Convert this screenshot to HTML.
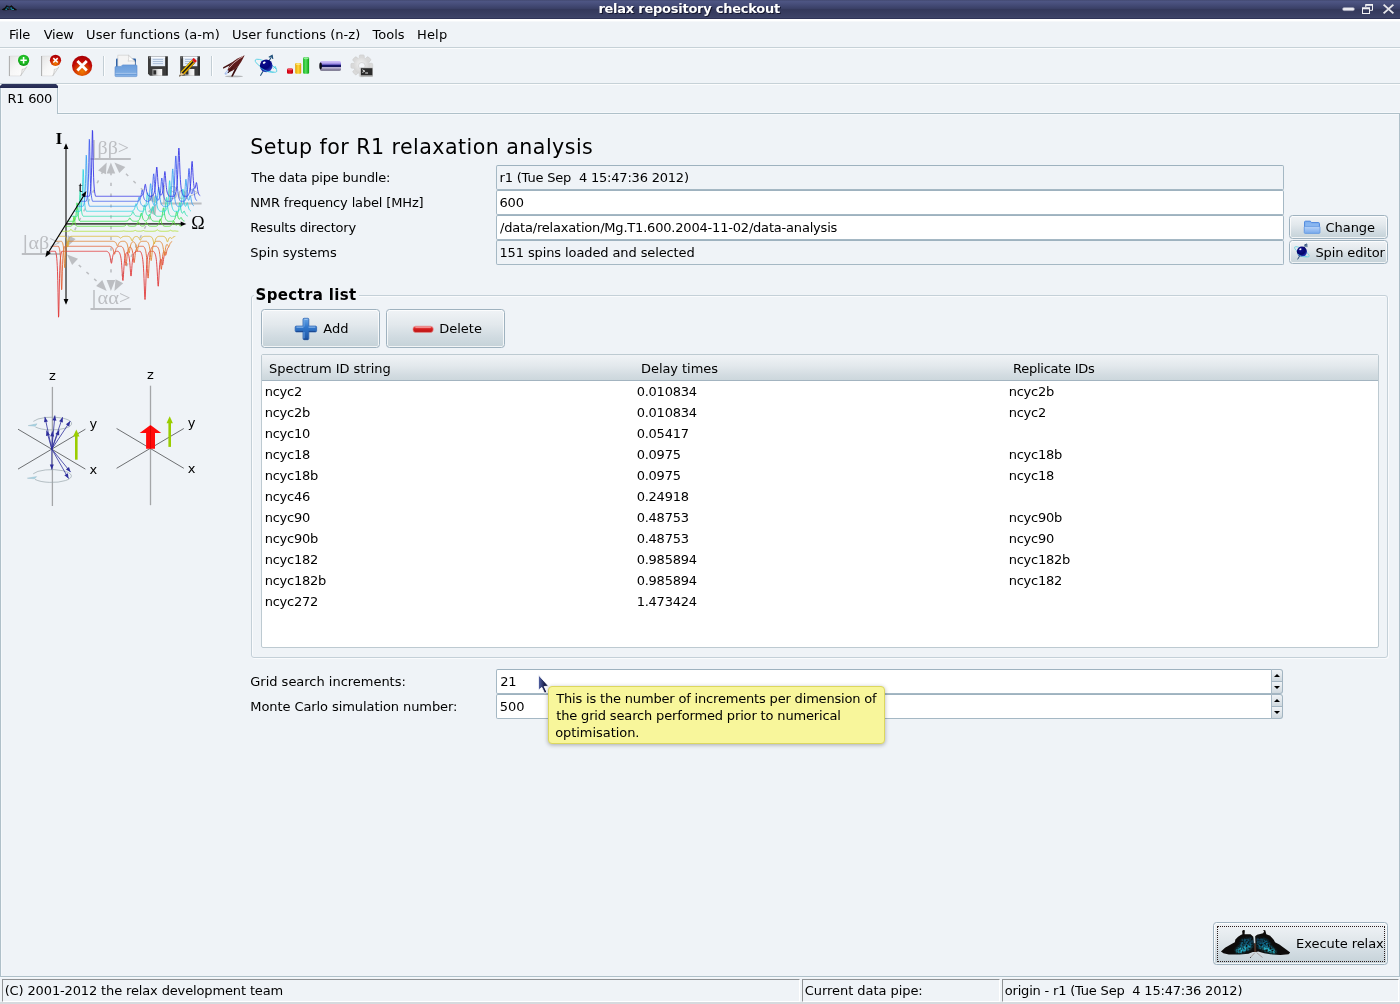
<!DOCTYPE html>
<html>
<head>
<meta charset="utf-8">
<title>relax repository checkout</title>
<style>
html,body{margin:0;padding:0;}
body{width:1400px;height:1004px;overflow:hidden;background:#eff3f7;font-family:"DejaVu Sans","Liberation Sans",sans-serif;font-size:13px;color:#000;position:relative;}
#root{position:absolute;left:0;top:0;width:1400px;height:1004px;will-change:transform;}
.abs{position:absolute;}
.t{position:absolute;white-space:pre;line-height:16px;height:16px;letter-spacing:-0.2px;}
#titlebar{left:0;top:0;width:1400px;height:19px;background:linear-gradient(#3f4569 0px,#4e5685 1px,#4a517e 3px,#414872 6px,#3a4066 8.5px,#33385a 9px,#353a5d 11px,#3c4266 17px,#3f4569 18px,#2f3458 18.4px,#2f3458 19px);}
#titletext{top:0;color:#fff;font-weight:bold;font-size:13px;line-height:17px;text-shadow:1px 1px 0 #15172e;}
.hl{position:absolute;left:0;width:1400px;height:1px;}
.field{position:absolute;box-sizing:border-box;border:1px solid #a5b8c4;border-top-color:#9eb2bf;border-radius:2px;height:25px;background:#fff;}
.field.ro{background:#eff3f7;box-shadow:none;}
.btn{position:absolute;box-sizing:border-box;border:1px solid #9fb2bf;border-radius:3.5px;background:linear-gradient(#f0f3f6 0%,#e2e8ec 40%,#d2dce2 70%,#c5d2d8 100%);box-shadow:inset 0 0 0 1px rgba(255,255,255,.75);}
.sbtn{position:absolute;box-sizing:border-box;left:1271px;width:12px;height:13px;border:1px solid #a3b5c2;border-left-color:#a9bac6;background:linear-gradient(#f0f3f6,#d0d9df);}
.sbtn i{position:absolute;left:2.1px;width:0;height:0;border-left:3.1px solid transparent;border-right:3.1px solid transparent;}
.sbtn i.u{top:3.8px;border-bottom:3.5px solid #000;}
.sbtn i.d{top:3.6px;border-top:3.5px solid #000;}
.sb{position:absolute;top:979px;height:23px;box-sizing:border-box;border-top:1px solid #8f9294;border-left:1px solid #8f9294;border-right:1px solid #fff;border-bottom:1px solid #fff;}
</style>
</head>
<body>
<div id="root">
<div id="titlebar" class="abs"></div>
<div id="titletext" class="t" style="left:598.4px;letter-spacing:-0.25px;">relax repository checkout</div>
<div class="hl" style="top:19px;height:2px;background:#fff;"></div>
<div class="hl" style="top:21px;background:#f6f8fa;"></div>
<div class="hl" style="top:47px;background:#c6d1d7;"></div>
<div class="hl" style="top:48px;background:#fbfcfd;"></div>
<div id="toolbar" class="abs" style="left:0;top:49px;width:1400px;height:34px;"><svg width="400" height="34" viewBox="0 49 400 34" style="position:absolute;left:0;top:0;">
<defs>
<linearGradient id="gPaper" x1="0" y1="0" x2="1" y2="1"><stop offset="0" stop-color="#e4e4e4"/><stop offset=".45" stop-color="#f6f6f6"/><stop offset="1" stop-color="#ffffff"/></linearGradient>
<radialGradient id="gGreen" cx=".5" cy=".4" r=".6"><stop offset="0" stop-color="#35d23a"/><stop offset=".7" stop-color="#18b41f"/><stop offset="1" stop-color="#0c9414"/></radialGradient>
<radialGradient id="gRed" cx=".5" cy=".78" r=".75"><stop offset="0" stop-color="#f07c00"/><stop offset=".35" stop-color="#dc4a00"/><stop offset=".7" stop-color="#c00a06"/><stop offset="1" stop-color="#a80004"/></radialGradient>
<linearGradient id="gFold" x1="0" y1="0" x2="0" y2="1"><stop offset="0" stop-color="#6a9ddb"/><stop offset="1" stop-color="#86b2e6"/></linearGradient>
<linearGradient id="gMetal" x1="0" y1="0" x2="1" y2="0"><stop offset="0" stop-color="#9a9a9a"/><stop offset=".6" stop-color="#e8e8e8"/><stop offset="1" stop-color="#fafafa"/></linearGradient>
<linearGradient id="gCyl" x1="0" y1="0" x2="0" y2="1"><stop offset="0" stop-color="#d2c2fa"/><stop offset=".22" stop-color="#b6a6f0"/><stop offset=".36" stop-color="#6a5cc0"/><stop offset=".44" stop-color="#15156a"/><stop offset=".58" stop-color="#15155e"/><stop offset=".66" stop-color="#b8b0d4"/><stop offset=".8" stop-color="#a69ebc"/><stop offset="1" stop-color="#57526e"/></linearGradient>
<radialGradient id="gSph" cx=".4" cy=".3" r=".8"><stop offset="0" stop-color="#0c0c92"/><stop offset=".5" stop-color="#04047a"/><stop offset=".82" stop-color="#2636b8"/><stop offset="1" stop-color="#86a6ea"/></radialGradient>
<linearGradient id="gBarR" x1="0" y1="0" x2="1" y2="0"><stop offset="0" stop-color="#c80010"/><stop offset=".5" stop-color="#e81020"/><stop offset="1" stop-color="#b00010"/></linearGradient>
<linearGradient id="gBarY" x1="0" y1="0" x2="1" y2="0"><stop offset="0" stop-color="#e0a000"/><stop offset=".5" stop-color="#ffd83a"/><stop offset="1" stop-color="#e09800"/></linearGradient>
<linearGradient id="gBarG" x1="0" y1="0" x2="1" y2="0"><stop offset="0" stop-color="#10b018"/><stop offset=".45" stop-color="#58e060"/><stop offset="1" stop-color="#08a010"/></linearGradient>
<radialGradient id="gGear" cx=".45" cy=".4" r=".6"><stop offset="0" stop-color="#f2f2f2"/><stop offset="1" stop-color="#cfcfcf"/></radialGradient>
<g id="paper">
 <path d="M9.4 56.1 H26.7 V66.9 L20.6 75.9 H9.4 Z" fill="url(#gPaper)"/>
 <path d="M9.4 56.1 H26.7 M9.4 75.9 H20.6" stroke="#d9d9d9" stroke-width=".6"/>
 <path d="M26.7 56.1 V66.9" stroke="#e3e3e3" stroke-width=".6"/>
 <path d="M9.4 56 V76" stroke="#a9a9a9" stroke-width="1"/>
 <path d="M20.6 75.9 C21.6 73.4 22.2 71.4 22 69.4 C23.8 69.2 25.4 68.4 26.7 66.9 Z" fill="#f2f2f2" stroke="#b8b8b8" stroke-width=".6"/>
</g>
<g id="floppy">
 <path d="M148 56.2 H167.8 V75.8 H150 L148 73.8 Z" fill="#3c3c3c"/>
 <path d="M148.4 56.6 H167.4" stroke="#6a6a6a" stroke-width=".8"/>
 <rect x="166.2" y="57" width="1.2" height="18" fill="#2a2a2a"/>
 <rect x="150.9" y="56.6" width="14.2" height="9.6" fill="#e6eef8"/>
 <rect x="150.9" y="56.6" width="14.2" height="1.4" fill="#f8fbff"/>
 <path d="M152.8 59.4 H163 M152.8 61.5 H163 M152.8 63.6 H163" stroke="#9db4d2" stroke-width=".8"/>
 <rect x="152.4" y="69" width="9.8" height="6.8" fill="url(#gMetal)"/>
 <rect x="153.4" y="70.3" width="2.8" height="4.2" fill="#2c2c2c"/>
 <rect x="149" y="57.2" width="1" height="1.2" fill="#888"/>
</g>
</defs>
<!-- new -->
<use href="#paper"/>
<circle cx="23.6" cy="60.3" r="5.6" fill="url(#gGreen)"/>
<path d="M20.4 60.3 H26.8 M23.6 57.1 V63.5" stroke="#fff" stroke-width="1.5"/>
<!-- close -->
<use href="#paper" x="32.2"/>
<circle cx="55.5" cy="60.3" r="5.6" fill="url(#gRed)"/>
<path d="M53.3 58.1 L57.7 62.5 M57.7 58.1 L53.3 62.5" stroke="#fff" stroke-width="1.5"/>
<!-- close all -->
<circle cx="82.1" cy="65.8" r="10.1" fill="url(#gRed)"/>
<path d="M77.4 61.1 L86.8 70.5 M86.8 61.1 L77.4 70.5" stroke="#fff" stroke-width="2.8"/>
<!-- sep -->
<rect x="103" y="56" width="1" height="20" fill="#c3ced5"/><rect x="104" y="56" width="1" height="20" fill="#fcfdfe"/>
<!-- open -->
<path d="M116 59.2 Q116 58.4 117 58.4 H135 Q136 58.4 136 59.4 V70 H116 Z" fill="#2f62a6"/>
<path d="M117.8 55.2 H128.5 L135 61.6 V68 H117.8 Z" fill="#f4f4f4" stroke="#c9c9c9" stroke-width=".6"/>
<path d="M128.5 55.2 C129 57.5 128.8 59.8 128 61.2 C130.5 60.6 133 60.8 135 61.6 Z" fill="#fff" stroke="#c0c0c0" stroke-width=".6"/>
<path d="M115 67.4 Q115 66.4 116 66.4 H121 L122.5 64.9 H136 Q137 64.9 137 65.9 V75.6 Q137 76.6 136 76.6 H116 Q115 76.6 115 75.6 Z" fill="url(#gFold)" stroke="#5a8ccc" stroke-width=".6"/>
<path d="M115.6 73.4 H136.4" stroke="#b5d0f0" stroke-width=".9"/>
<path d="M115.6 74.3 H136.4" stroke="#5f92d0" stroke-width=".7"/>
<!-- save -->
<use href="#floppy"/>
<!-- save as -->
<use href="#floppy" x="32.2"/>
<g transform="translate(179.3 76.5) rotate(-46.9)">
 <path d="M0 0 L4.6 -2.2 H20.6 V2.2 H4.6 Z" fill="#1a1a1a"/>
 <path d="M4.6 -2.2 H20.6 V-0.8 H4.6 Z" fill="#f4c400"/>
 <path d="M4.6 0.7 H20.6 V2.2 H4.6 Z" fill="#dca400"/>
 <path d="M0 0 L4.6 -2.2 V2.2 Z" fill="#e6c48c"/>
 <path d="M0 0 L1.6 -0.75 V0.75 Z" fill="#333"/>
 <rect x="20.6" y="-2.3" width="2.9" height="4.6" rx="1" fill="#e01414"/>
</g>
<!-- sep -->
<rect x="211" y="56" width="1" height="20" fill="#c3ced5"/><rect x="212" y="56" width="1" height="20" fill="#fcfdfe"/>
<!-- rocket -->
<ellipse cx="234" cy="76.4" rx="9" ry=".8" fill="#7a7a7a" opacity=".5"/>
<path d="M227.8 69.6 L224.5 73.2 224.9 74.4 226.1 74.8 229.8 71.6 Z" fill="#a4bcec"/>
<path d="M228.2 70.4 L225.7 73.0 226.3 73.6 229.0 71.2 Z" fill="#e8effc"/>
<path d="M234.4 61.0 L223.1 67.2 223.2 68.7 230.1 65.2 Z" fill="#451212"/>
<path d="M238.9 64.9 L232.8 76.5 231.1 76.6 234.6 69.2 Z" fill="#3a0d0d"/>
<path d="M227.6 69.7 L228.9 66.8 231.3 63.6 234.2 60.8 237.6 58.5 241.4 56.7 244.6 55.2 243.0 58.4 241.1 62.1 238.7 65.4 235.9 68.3 232.6 70.6 229.6 71.9 Z" fill="#5e1a1a"/>
<path d="M228.9 68.3 L233.6 63.1 239.2 58.8 243.1 56.3" stroke="#d8b8b8" stroke-width=".9" fill="none"/>
<path d="M234.6 65.5 L228.6 73.1 227.4 72.5 Z" fill="#2c0808"/>
<!-- spin -->
<path d="M260.4 75.8 L271.8 56.2" stroke="#1c4c78" stroke-width="1.05"/>
<path d="M268.8 57.2 L272.2 55.4 L272.8 59" stroke="#1c4c78" stroke-width="1.1" fill="none"/>
<ellipse cx="266.2" cy="65.8" rx="12.2" ry="3.6" transform="rotate(28 266.2 65.4)" fill="none" stroke="#3ccbe2" stroke-width=".7"/>
<circle cx="266.2" cy="65.8" r="6.4" fill="url(#gSph)"/>
<path d="M260.2 67.4 C263 69.8 268.4 72.8 273.6 72.2" stroke="#3ccbe2" stroke-width=".8" fill="none"/>
<ellipse cx="264.2" cy="62.6" rx="1.5" ry="1" fill="#fff" transform="rotate(-25 264.2 62.6)"/>
<path d="M273.4 68.6 L275.2 66.4 L276.4 69" stroke="#35c8e0" stroke-width=".8" fill="none"/>
<!-- bars -->
<rect x="287" y="68.4" width="6" height="5.4" rx="1.2" fill="url(#gBarR)"/>
<ellipse cx="290" cy="69.4" rx="2.6" ry=".9" fill="#f05060"/>
<rect x="295.2" y="63" width="6" height="10.8" rx="1.2" fill="url(#gBarY)"/>
<ellipse cx="298.2" cy="64.1" rx="2.6" ry=".9" fill="#ffe880"/>
<rect x="303.1" y="57.2" width="6" height="16.6" rx="1.2" fill="url(#gBarG)"/>
<ellipse cx="306.1" cy="58.3" rx="2.6" ry=".9" fill="#90f098"/>
<!-- pipe -->
<rect x="320" y="61" width="21" height="9.8" rx="1.6" fill="url(#gCyl)"/>
<ellipse cx="320.6" cy="65.9" rx="1.3" ry="3.4" fill="#0a0a14"/>
<!-- gear -->
<g transform="translate(361.8 65.8)">
 <g fill="#d9d9d9" stroke="#c6c6c6" stroke-width=".5">
  <rect x="-2.5" y="-10.9" width="5" height="21.8" rx="1.1"/>
  <rect x="-2.5" y="-10.9" width="5" height="21.8" rx="1.1" transform="rotate(45)"/>
  <rect x="-2.5" y="-10.9" width="5" height="21.8" rx="1.1" transform="rotate(90)"/>
  <rect x="-2.5" y="-10.9" width="5" height="21.8" rx="1.1" transform="rotate(135)"/>
 </g>
 <circle r="8.4" fill="url(#gGear)"/>
 <circle r="3.3" fill="#f4f6f9" stroke="#c4c4c4" stroke-width=".6"/>
</g>
<rect x="360.3" y="67.2" width="12.7" height="9.6" rx=".6" fill="#c8c8c8"/>
<rect x="360.9" y="68.2" width="11.5" height="7.2" fill="#2b2b2b"/>
<rect x="360.9" y="75.4" width="11.5" height="1" fill="#9a9a9a"/>
<path d="M362.4 69.8 L364.8 71.1 L362.4 72.4" stroke="#fff" stroke-width=".9" fill="none"/>
<path d="M365.2 73 H368" stroke="#fff" stroke-width=".9"/>
</svg>
</div>
<div class="hl" style="top:83px;background:#c6d1d7;"></div>
<div class="hl" style="top:84px;background:#fbfcfd;"></div>
<div class="abs" style="left:0;top:113px;width:1400px;height:864px;box-sizing:border-box;border:1px solid #afc0c9;box-shadow:0 1px 0 #f5f8fb;"></div>
<div class="abs" style="left:58px;top:112px;width:1342px;height:1px;background:#f5f8fb;"></div>
<div class="abs" style="left:58px;top:114px;width:1341px;height:1px;background:#f5f8fb;"></div>
<div class="abs" style="left:1px;top:114px;width:1px;height:862px;background:#f5f8fb;"></div>
<div class="abs" style="left:0;top:86px;width:58px;height:28px;box-sizing:border-box;border-left:1px solid #afc0c9;border-right:1px solid #afc0c9;background:#eff3f7;box-shadow:inset 1px 0 0 #f5f8fb;"></div>
<div class="abs" style="left:58px;top:88px;width:1px;height:24px;background:#f5f8fb;"></div>
<div class="abs" style="left:0;top:84px;width:58px;height:4px;background:linear-gradient(#30375f,#222850);clip-path:polygon(2px 0,56px 0,58px 2px,58px 4px,0 4px,0 2px);"></div>
<div id="img1" class="abs" style="left:0;top:113px;width:240px;height:230px;"><svg width="240" height="230" viewBox="0 113 240 230" style="position:absolute;left:0;top:0;">
<g stroke="#bcbec2" fill="none" stroke-width="2">
<path d="M90.5 158.9 H130.8 M90.5 308.9 H130.8 M21.8 253.9 H60 M160.4 203.6 H201.6"/>
<path d="M94 140 V158.9 M94 290 V308.9 M25.3 235 V253.9 M164 185 V203.6" stroke-width="1.5"/>
<path d="M111 172 V282" stroke-dasharray="3.2 7.6" stroke-width="1.6"/>
<path d="M103 171 L71 238 M118.5 166.5 L152 199 M71 258 L102 286 M117.5 285 L152 213" stroke-dasharray="3.2 7.2" stroke-width="1.5"/>
</g>
<g fill="#bcbec2">
<path d="M110.9 162.4 L115.2 173.4 L106.6 173.4 Z"/>
<path d="M106.7 162.4 L105.9 174.2 L98.1 170.5 Z"/>
<path d="M114.4 162.4 L125.3 166.9 L119.3 173.1 Z"/>
<path d="M110.9 291.0 L106.6 280.0 L115.2 280.0 Z"/>
<path d="M106.7 291.0 L96.1 285.9 L102.3 280.0 Z"/>
<path d="M114.4 291.0 L115.6 279.2 L123.2 283.2 Z"/>
<path d="M67.0 247.0 L67.8 235.2 L75.6 238.9 Z"/>
<path d="M67.0 254.4 L78.0 258.8 L72.1 265.0 Z"/>
<path d="M158.0 204.0 L147.1 199.5 L153.1 193.3 Z"/>
<path d="M156.7 203.7 L155.5 215.5 L147.9 211.5 Z"/>
</g>
<g fill="#bcbec2" font-family="Liberation Serif, DejaVu Serif, serif" font-size="18">
<text x="97.6" y="154" textLength="31.5" lengthAdjust="spacingAndGlyphs">ββ&gt;</text>
<text x="97.6" y="304" textLength="33" lengthAdjust="spacingAndGlyphs">αα&gt;</text>
<text x="28.6" y="249" textLength="32" lengthAdjust="spacingAndGlyphs">αβ&gt;</text>
<text x="167.4" y="198.6" textLength="32" lengthAdjust="spacingAndGlyphs">βα&gt;</text>
</g>
<path d="M66 148 V300" stroke="#4a4a4a" stroke-width="1.5"/>
<g fill="#000"><path d="M66.0 143.2 L68.4 149.0 L63.6 149.0 Z"/><path d="M66.0 304.8 L63.6 299.0 L68.4 299.0 Z"/></g>
<path d="M66 223.9 H182" stroke="#4a4a4a" stroke-width="1.7"/>
<g fill="#000"><path d="M186.3 223.9 L180.7 226.2 L180.7 221.6 Z"/></g>
<polyline points="49.00,251.30 49.25,251.30 49.50,251.30 49.75,251.30 50.00,251.30 50.25,251.30 50.50,251.30 50.75,251.30 51.00,251.30 51.25,251.30 51.50,251.30 51.75,251.30 52.00,251.30 52.25,251.30 52.50,251.30 52.75,251.30 53.00,251.30 53.25,251.30 53.50,251.30 53.75,251.30 54.00,251.30 54.25,251.30 54.50,251.30 54.75,251.30 55.00,251.30 55.25,251.30 55.50,251.47 55.75,252.23 56.00,253.19 56.25,254.43 56.50,256.06 56.75,258.25 57.00,261.28 57.25,265.55 57.50,271.68 57.75,280.50 58.00,292.64 58.25,306.85 58.50,317.20 58.75,315.88 59.00,304.04 59.25,289.96 59.50,278.48 59.75,270.27 60.00,264.57 60.25,260.59 60.50,257.76 60.75,255.69 61.00,254.15 61.25,252.98 61.50,252.06 61.75,251.34 62.00,251.30 62.25,251.30 62.50,251.30 62.75,251.30 63.00,251.30 63.25,251.30 63.50,251.30 63.75,251.30 64.00,251.30 64.25,251.30 64.50,251.30 64.75,251.30 65.00,251.30 65.25,251.30 65.50,251.30 65.75,251.30 66.00,251.30 66.25,251.30 66.50,251.30 66.75,251.30 67.00,251.30 67.25,251.30 67.50,251.30 67.75,251.30 68.00,251.30 68.25,251.30 68.50,251.30 68.75,251.30 69.00,251.30 69.25,251.30 69.50,251.30 69.75,251.30 70.00,251.30 70.25,251.30 70.50,251.30 70.75,251.30 71.00,251.30 71.25,251.30 71.50,251.30 71.75,251.30 72.00,251.30 72.25,251.30 72.50,251.30 72.75,251.30 73.00,251.30 73.25,251.30 73.50,251.30 73.75,251.30 74.00,251.30 74.25,251.30 74.50,251.30 74.75,251.30 75.00,251.30 75.25,251.30 75.50,251.30 75.75,251.30 76.00,251.30 76.25,251.30 76.50,251.30 76.75,251.30 77.00,251.30 77.25,251.30 77.50,251.30 77.75,251.30 78.00,251.30 78.25,251.30 78.50,251.30 78.75,251.30 79.00,251.30 79.25,251.30 79.50,251.30 79.75,251.30 80.00,251.30 80.25,251.30 80.50,251.30 80.75,251.30 81.00,251.30 81.25,251.30 81.50,251.30 81.75,251.30 82.00,251.30 82.25,251.30 82.50,251.30 82.75,251.30 83.00,251.30 83.25,251.30 83.50,251.30 83.75,251.30 84.00,251.30 84.25,251.30 84.50,251.30 84.75,251.30 85.00,251.30 85.25,251.30 85.50,251.30 85.75,251.30 86.00,251.30 86.25,251.30 86.50,251.30 86.75,251.30 87.00,251.30 87.25,251.30 87.50,251.30 87.75,251.30 88.00,251.30 88.25,251.30 88.50,251.30 88.75,251.30 89.00,251.30 89.25,251.30 89.50,251.30 89.75,251.30 90.00,251.30 90.25,251.30 90.50,251.30 90.75,251.30 91.00,251.30 91.25,251.30 91.50,251.30 91.75,251.30 92.00,251.30 92.25,251.30 92.50,251.30 92.75,251.30 93.00,251.30 93.25,251.30 93.50,251.30 93.75,251.30 94.00,251.30 94.25,251.30 94.50,251.30 94.75,251.30 95.00,251.30 95.25,251.30 95.50,251.30 95.75,251.30 96.00,251.30 96.25,251.30 96.50,251.30 96.75,251.30 97.00,251.30 97.25,251.30 97.50,251.30 97.75,251.30 98.00,251.30 98.25,251.30 98.50,251.30 98.75,251.30 99.00,251.30 99.25,251.30 99.50,251.30 99.75,251.30 100.00,251.30 100.25,251.30 100.50,251.30 100.75,251.30 101.00,251.30 101.25,251.30 101.50,251.30 101.75,251.30 102.00,251.30 102.25,251.30 102.50,251.30 102.75,251.30 103.00,251.30 103.25,251.30 103.50,251.30 103.75,251.30 104.00,251.30 104.25,251.30 104.50,251.30 104.75,251.30 105.00,251.30 105.25,251.30 105.50,251.30 105.75,251.30 106.00,251.30 106.25,251.30 106.50,251.30 106.75,251.33 107.00,251.42 107.25,251.52 107.50,251.64 107.75,251.78 108.00,251.95 108.25,252.16 108.50,252.41 108.75,252.71 109.00,253.10 109.25,253.58 109.50,254.19 109.75,254.97 110.00,255.96 110.25,257.22 110.50,258.74 110.75,260.45 111.00,262.08 111.25,263.16 111.50,263.27 111.75,262.35 112.00,260.79 112.25,259.07 112.50,257.50 112.75,256.19 113.00,255.15 113.25,254.33 113.50,253.69 113.75,253.18 114.00,252.78 114.25,252.46 114.50,252.20 114.75,251.99 115.00,251.81 115.25,251.67 115.50,251.54 115.75,251.44 116.00,251.35 116.25,251.30 116.50,251.30 116.75,251.30 117.00,251.30 117.25,251.30 117.50,251.30 117.75,251.30 118.00,251.30 118.25,251.38 118.50,251.59 118.75,251.84 119.00,252.13 119.25,252.48 119.50,252.89 119.75,253.39 120.00,254.00 120.25,254.75 120.50,255.69 120.75,256.87 121.00,258.36 121.25,260.27 121.50,262.70 121.75,265.77 122.00,269.49 122.25,273.67 122.50,277.64 122.75,280.30 123.00,280.56 123.25,278.32 123.50,274.51 123.75,270.30 124.00,266.46 124.25,263.26 124.50,260.71 124.75,258.71 125.00,257.14 125.25,255.90 125.50,254.93 125.75,254.14 126.00,253.51 126.25,252.98 126.50,252.72 126.75,252.56 127.00,252.49 127.25,252.50 127.50,252.61 127.75,252.88 128.00,253.36 128.25,253.94 128.50,254.66 128.75,255.56 129.00,256.70 129.25,258.15 129.50,260.01 129.75,262.37 130.00,265.28 130.25,268.68 130.50,272.19 130.75,274.99 131.00,276.09 131.25,274.99 131.50,272.19 131.75,268.68 132.00,265.28 132.25,262.37 132.50,260.01 132.75,258.15 133.00,256.70 133.25,255.56 133.50,254.66 133.75,253.94 134.00,253.36 134.25,252.88 134.50,252.49 134.75,252.17 135.00,251.90 135.25,251.66 135.50,251.47 135.75,251.30 136.00,251.30 136.25,251.30 136.50,251.30 136.75,251.30 137.00,251.30 137.25,251.30 137.50,251.30 137.75,251.30 138.00,251.30 138.25,251.30 138.50,251.30 138.75,251.30 139.00,251.30 139.25,251.30 139.50,251.30 139.75,251.30 140.00,251.30 140.25,251.30 140.50,251.63 140.75,252.01 141.00,252.46 141.25,252.99 141.50,253.62 141.75,254.38 142.00,255.30 142.25,256.43 142.50,257.83 142.75,259.59 143.00,261.81 143.25,264.63 143.50,268.25 143.75,272.83 144.00,278.51 144.25,285.12 144.50,291.95 144.75,297.41 145.00,299.54 145.25,297.41 145.50,291.95 145.75,285.12 146.00,278.51 146.25,272.83 146.50,268.25 146.75,264.63 147.00,261.81 147.25,259.59 147.50,257.83 147.75,256.43 148.00,255.30 148.25,254.38 148.50,253.62 148.75,252.99 149.00,252.46 149.25,252.01 149.50,251.63 149.75,251.30 150.00,251.30 150.25,251.30 150.50,251.30 150.75,251.30 151.00,251.30 151.25,251.30 151.50,251.30 151.75,251.30 152.00,251.30 152.25,251.30 152.50,251.30 152.75,251.30 153.00,251.30 153.25,251.30 153.50,251.34 153.75,251.59 154.00,251.87 154.25,252.21 154.50,252.60 154.75,253.08 155.00,253.65 155.25,254.34 155.50,255.19 155.75,256.25 156.00,257.57 156.25,259.26 156.50,261.40 156.75,264.14 157.00,267.61 157.25,271.86 157.50,276.73 157.75,281.57 158.00,285.19 158.25,286.23 158.50,284.23 158.75,280.11 159.00,275.31 159.25,270.83 159.50,267.13 159.75,264.26 160.00,262.13 160.25,260.63 160.50,259.66 160.75,259.16 161.00,259.10 161.25,259.48 161.50,260.30 161.75,261.51 162.00,262.99 162.25,264.35 162.50,265.06 162.75,264.67 163.00,263.27 163.25,261.47 163.50,259.57 163.75,257.88 164.00,256.48 164.25,255.38 164.50,254.51 164.75,253.83 165.00,253.30 165.25,252.87 165.50,252.53 165.75,252.25 166.00,252.02" fill="none" stroke="#e03434" stroke-width="0.88" stroke-linejoin="round"/>
<polyline points="52.08,246.30 52.33,246.30 52.58,246.30 52.83,246.30 53.08,246.30 53.33,246.30 53.58,246.30 53.83,246.30 54.08,246.30 54.33,246.30 54.58,246.30 54.83,246.30 55.08,246.30 55.33,246.30 55.58,246.30 55.83,246.30 56.08,246.30 56.33,246.30 56.58,246.30 56.83,246.30 57.08,246.30 57.33,246.30 57.58,246.30 57.83,246.30 58.08,246.30 58.33,246.30 58.58,246.41 58.83,246.91 59.08,247.55 59.33,248.36 59.58,249.44 59.83,250.89 60.08,252.89 60.33,255.70 60.58,259.75 60.83,265.57 61.08,273.58 61.33,282.96 61.58,289.80 61.83,288.92 62.08,281.11 62.33,271.81 62.58,264.24 62.83,258.82 63.08,255.06 63.33,252.43 63.58,250.56 63.83,249.20 64.08,248.18 64.33,247.41 64.58,246.80 64.83,246.33 65.08,246.30 65.33,246.30 65.58,246.30 65.83,246.30 66.08,246.30 66.33,246.30 66.58,246.30 66.83,246.30 67.08,246.30 67.33,246.30 67.58,246.30 67.83,246.30 68.08,246.30 68.33,246.30 68.58,246.30 68.83,246.30 69.08,246.30 69.33,246.30 69.58,246.30 69.83,246.30 70.08,246.30 70.33,246.30 70.58,246.30 70.83,246.30 71.08,246.30 71.33,246.30 71.58,246.30 71.83,246.30 72.08,246.30 72.33,246.30 72.58,246.30 72.83,246.30 73.08,246.30 73.33,246.30 73.58,246.30 73.83,246.30 74.08,246.30 74.33,246.30 74.58,246.30 74.83,246.30 75.08,246.30 75.33,246.30 75.58,246.30 75.83,246.30 76.08,246.30 76.33,246.30 76.58,246.30 76.83,246.30 77.08,246.30 77.33,246.30 77.58,246.30 77.83,246.30 78.08,246.30 78.33,246.30 78.58,246.30 78.83,246.30 79.08,246.30 79.33,246.30 79.58,246.30 79.83,246.30 80.08,246.30 80.33,246.30 80.58,246.30 80.83,246.30 81.08,246.30 81.33,246.30 81.58,246.30 81.83,246.30 82.08,246.30 82.33,246.30 82.58,246.30 82.83,246.30 83.08,246.30 83.33,246.30 83.58,246.30 83.83,246.30 84.08,246.30 84.33,246.30 84.58,246.30 84.83,246.30 85.08,246.30 85.33,246.30 85.58,246.30 85.83,246.30 86.08,246.30 86.33,246.30 86.58,246.30 86.83,246.30 87.08,246.30 87.33,246.30 87.58,246.30 87.83,246.30 88.08,246.30 88.33,246.30 88.58,246.30 88.83,246.30 89.08,246.30 89.33,246.30 89.58,246.30 89.83,246.30 90.08,246.30 90.33,246.30 90.58,246.30 90.83,246.30 91.08,246.30 91.33,246.30 91.58,246.30 91.83,246.30 92.08,246.30 92.33,246.30 92.58,246.30 92.83,246.30 93.08,246.30 93.33,246.30 93.58,246.30 93.83,246.30 94.08,246.30 94.33,246.30 94.58,246.30 94.83,246.30 95.08,246.30 95.33,246.30 95.58,246.30 95.83,246.30 96.08,246.30 96.33,246.30 96.58,246.30 96.83,246.30 97.08,246.30 97.33,246.30 97.58,246.30 97.83,246.30 98.08,246.30 98.33,246.30 98.58,246.30 98.83,246.30 99.08,246.30 99.33,246.30 99.58,246.30 99.83,246.30 100.08,246.30 100.33,246.30 100.58,246.30 100.83,246.30 101.08,246.30 101.33,246.30 101.58,246.30 101.83,246.30 102.08,246.30 102.33,246.30 102.58,246.30 102.83,246.30 103.08,246.30 103.33,246.30 103.58,246.30 103.83,246.30 104.08,246.30 104.33,246.30 104.58,246.30 104.83,246.30 105.08,246.30 105.33,246.30 105.58,246.30 105.83,246.30 106.08,246.30 106.33,246.30 106.58,246.30 106.83,246.30 107.08,246.30 107.33,246.30 107.58,246.30 107.83,246.30 108.08,246.30 108.33,246.30 108.58,246.30 108.83,246.30 109.08,246.30 109.33,246.30 109.58,246.30 109.83,246.32 110.08,246.38 110.33,246.45 110.58,246.52 110.83,246.62 111.08,246.73 111.33,246.87 111.58,247.03 111.83,247.23 112.08,247.49 112.33,247.80 112.58,248.21 112.83,248.72 113.08,249.38 113.33,250.21 113.58,251.21 113.83,252.34 114.08,253.41 114.33,254.13 114.58,254.20 114.83,253.60 115.08,252.57 115.33,251.43 115.58,250.39 115.83,249.53 116.08,248.84 116.33,248.30 116.58,247.88 116.83,247.54 117.08,247.28 117.33,247.07 117.58,246.90 117.83,246.75 118.08,246.64 118.33,246.54 118.58,246.46 118.83,246.39 119.08,246.33 119.33,246.30 119.58,246.30 119.83,246.30 120.08,246.30 120.33,246.30 120.58,246.30 120.83,246.30 121.08,246.30 121.33,246.35 121.58,246.49 121.83,246.66 122.08,246.85 122.33,247.08 122.58,247.35 122.83,247.68 123.08,248.08 123.33,248.58 123.58,249.20 123.83,249.97 124.08,250.96 124.33,252.22 124.58,253.82 124.83,255.85 125.08,258.31 125.33,261.06 125.58,263.69 125.83,265.44 126.08,265.61 126.33,264.13 126.58,261.62 126.83,258.84 127.08,256.31 127.33,254.19 127.58,252.51 127.83,251.19 128.08,250.15 128.33,249.34 128.58,248.69 128.83,248.18 129.08,247.76 129.33,247.41 129.58,247.24 129.83,247.13 130.08,247.08 130.33,247.09 130.58,247.16 130.83,247.34 131.08,247.66 131.33,248.04 131.58,248.51 131.83,249.11 132.08,249.86 132.33,250.82 132.58,252.05 132.83,253.60 133.08,255.53 133.33,257.77 133.58,260.09 133.83,261.94 134.08,262.66 134.33,261.94 134.58,260.09 134.83,257.77 135.08,255.53 135.33,253.60 135.58,252.05 135.83,250.82 136.08,249.86 136.33,249.11 136.58,248.51 136.83,248.04 137.08,247.66 137.33,247.34 137.58,247.09 137.83,246.87 138.08,246.69 138.33,246.54 138.58,246.41 138.83,246.30 139.08,246.30 139.33,246.30 139.58,246.30 139.83,246.30 140.08,246.30 140.33,246.30 140.58,246.30 140.83,246.30 141.08,246.30 141.33,246.30 141.58,246.30 141.83,246.30 142.08,246.30 142.33,246.30 142.58,246.30 142.83,246.30 143.08,246.30 143.33,246.30 143.58,246.52 143.83,246.77 144.08,247.06 144.33,247.41 144.58,247.83 144.83,248.33 145.08,248.94 145.33,249.69 145.58,250.61 145.83,251.77 146.08,253.23 146.33,255.10 146.58,257.49 146.83,260.51 147.08,264.26 147.33,268.62 147.58,273.13 147.83,276.73 148.08,278.14 148.33,276.73 148.58,273.13 148.83,268.62 149.08,264.26 149.33,260.51 149.58,257.49 149.83,255.10 150.08,253.23 150.33,251.77 150.58,250.61 150.83,249.69 151.08,248.94 151.33,248.33 151.58,247.83 151.83,247.41 152.08,247.06 152.33,246.77 152.58,246.52 152.83,246.30 153.08,246.30 153.33,246.30 153.58,246.30 153.83,246.30 154.08,246.30 154.33,246.30 154.58,246.30 154.83,246.30 155.08,246.30 155.33,246.30 155.58,246.30 155.83,246.30 156.08,246.30 156.33,246.30 156.58,246.33 156.83,246.49 157.08,246.68 157.33,246.90 157.58,247.16 157.83,247.47 158.08,247.85 158.33,248.31 158.58,248.87 158.83,249.57 159.08,250.44 159.33,251.55 159.58,252.97 159.83,254.78 160.08,257.06 160.33,259.87 160.58,263.08 160.83,266.28 161.08,268.67 161.33,269.35 161.58,268.03 161.83,265.32 162.08,262.14 162.33,259.19 162.58,256.75 162.83,254.85 163.08,253.45 163.33,252.46 163.58,251.82 163.83,251.49 164.08,251.45 164.33,251.70 164.58,252.24 164.83,253.04 165.08,254.01 165.33,254.91 165.58,255.38 165.83,255.12 166.08,254.20 166.33,253.01 166.58,251.76 166.83,250.64 167.08,249.72 167.33,248.99 167.58,248.42 167.83,247.97 168.08,247.62 168.33,247.34 168.58,247.11 168.83,246.93 169.08,246.78" fill="none" stroke="#e25a30" stroke-width="0.88" stroke-linejoin="round"/>
<polyline points="55.16,241.30 55.41,241.30 55.66,241.30 55.91,241.30 56.16,241.30 56.41,241.30 56.66,241.30 56.91,241.30 57.16,241.30 57.41,241.30 57.66,241.30 57.91,241.30 58.16,241.30 58.41,241.30 58.66,241.30 58.91,241.30 59.16,241.30 59.41,241.30 59.66,241.30 59.91,241.30 60.16,241.30 60.41,241.30 60.66,241.30 60.91,241.30 61.16,241.30 61.41,241.30 61.66,241.37 61.91,241.67 62.16,242.06 62.41,242.55 62.66,243.20 62.91,244.08 63.16,245.29 63.41,247.00 63.66,249.45 63.91,252.98 64.16,257.84 64.41,263.52 64.66,267.66 64.91,267.13 65.16,262.40 65.41,256.76 65.66,252.17 65.91,248.89 66.16,246.61 66.41,245.02 66.66,243.88 66.91,243.06 67.16,242.44 67.41,241.97 67.66,241.61 67.91,241.32 68.16,241.30 68.41,241.30 68.66,241.30 68.91,241.30 69.16,241.30 69.41,241.30 69.66,241.30 69.91,241.30 70.16,241.30 70.41,241.30 70.66,241.30 70.91,241.30 71.16,241.30 71.41,241.30 71.66,241.30 71.91,241.30 72.16,241.30 72.41,241.30 72.66,241.30 72.91,241.30 73.16,241.30 73.41,241.30 73.66,241.30 73.91,241.30 74.16,241.30 74.41,241.30 74.66,241.30 74.91,241.30 75.16,241.30 75.41,241.30 75.66,241.30 75.91,241.30 76.16,241.30 76.41,241.30 76.66,241.30 76.91,241.30 77.16,241.30 77.41,241.30 77.66,241.30 77.91,241.30 78.16,241.30 78.41,241.30 78.66,241.30 78.91,241.30 79.16,241.30 79.41,241.30 79.66,241.30 79.91,241.30 80.16,241.30 80.41,241.30 80.66,241.30 80.91,241.30 81.16,241.30 81.41,241.30 81.66,241.30 81.91,241.30 82.16,241.30 82.41,241.30 82.66,241.30 82.91,241.30 83.16,241.30 83.41,241.30 83.66,241.30 83.91,241.30 84.16,241.30 84.41,241.30 84.66,241.30 84.91,241.30 85.16,241.30 85.41,241.30 85.66,241.30 85.91,241.30 86.16,241.30 86.41,241.30 86.66,241.30 86.91,241.30 87.16,241.30 87.41,241.30 87.66,241.30 87.91,241.30 88.16,241.30 88.41,241.30 88.66,241.30 88.91,241.30 89.16,241.30 89.41,241.30 89.66,241.30 89.91,241.30 90.16,241.30 90.41,241.30 90.66,241.30 90.91,241.30 91.16,241.30 91.41,241.30 91.66,241.30 91.91,241.30 92.16,241.30 92.41,241.30 92.66,241.30 92.91,241.30 93.16,241.30 93.41,241.30 93.66,241.30 93.91,241.30 94.16,241.30 94.41,241.30 94.66,241.30 94.91,241.30 95.16,241.30 95.41,241.30 95.66,241.30 95.91,241.30 96.16,241.30 96.41,241.30 96.66,241.30 96.91,241.30 97.16,241.30 97.41,241.30 97.66,241.30 97.91,241.30 98.16,241.30 98.41,241.30 98.66,241.30 98.91,241.30 99.16,241.30 99.41,241.30 99.66,241.30 99.91,241.30 100.16,241.30 100.41,241.30 100.66,241.30 100.91,241.30 101.16,241.30 101.41,241.30 101.66,241.30 101.91,241.30 102.16,241.30 102.41,241.30 102.66,241.30 102.91,241.30 103.16,241.30 103.41,241.30 103.66,241.30 103.91,241.30 104.16,241.30 104.41,241.30 104.66,241.30 104.91,241.30 105.16,241.30 105.41,241.30 105.66,241.30 105.91,241.30 106.16,241.30 106.41,241.30 106.66,241.30 106.91,241.30 107.16,241.30 107.41,241.30 107.66,241.30 107.91,241.30 108.16,241.30 108.41,241.30 108.66,241.30 108.91,241.30 109.16,241.30 109.41,241.30 109.66,241.30 109.91,241.30 110.16,241.30 110.41,241.30 110.66,241.30 110.91,241.30 111.16,241.30 111.41,241.30 111.66,241.30 111.91,241.30 112.16,241.30 112.41,241.30 112.66,241.30 112.91,241.31 113.16,241.35 113.41,241.39 113.66,241.44 113.91,241.49 114.16,241.56 114.41,241.64 114.66,241.74 114.91,241.87 115.16,242.02 115.41,242.21 115.66,242.46 115.91,242.77 116.16,243.17 116.41,243.67 116.66,244.28 116.91,244.96 117.16,245.61 117.41,246.05 117.66,246.09 117.91,245.72 118.16,245.10 118.41,244.41 118.66,243.78 118.91,243.26 119.16,242.84 119.41,242.51 119.66,242.26 119.91,242.05 120.16,241.89 120.41,241.76 120.66,241.66 120.91,241.58 121.16,241.51 121.41,241.45 121.66,241.40 121.91,241.36 122.16,241.32 122.41,241.30 122.66,241.30 122.91,241.30 123.16,241.30 123.41,241.30 123.66,241.30 123.91,241.30 124.16,241.30 124.41,241.33 124.66,241.42 124.91,241.52 125.16,241.63 125.41,241.77 125.66,241.94 125.91,242.14 126.16,242.38 126.41,242.68 126.66,243.06 126.91,243.53 127.16,244.12 127.41,244.89 127.66,245.86 127.91,247.09 128.16,248.58 128.41,250.25 128.66,251.84 128.91,252.90 129.16,253.01 129.41,252.11 129.66,250.58 129.91,248.90 130.16,247.36 130.41,246.08 130.66,245.06 130.91,244.26 131.16,243.64 131.41,243.14 131.66,242.75 131.91,242.44 132.16,242.18 132.41,241.97 132.66,241.87 132.91,241.80 133.16,241.78 133.41,241.78 133.66,241.82 133.91,241.93 134.16,242.12 134.41,242.35 134.66,242.64 134.91,243.00 135.16,243.46 135.41,244.04 135.66,244.78 135.91,245.73 136.16,246.89 136.41,248.25 136.66,249.66 136.91,250.78 137.16,251.22 137.41,250.78 137.66,249.66 137.91,248.25 138.16,246.89 138.41,245.73 138.66,244.78 138.91,244.04 139.16,243.46 139.41,243.00 139.66,242.64 139.91,242.35 140.16,242.12 140.41,241.93 140.66,241.78 140.91,241.65 141.16,241.54 141.41,241.45 141.66,241.37 141.91,241.30 142.16,241.30 142.41,241.30 142.66,241.30 142.91,241.30 143.16,241.30 143.41,241.30 143.66,241.30 143.91,241.30 144.16,241.30 144.41,241.30 144.66,241.30 144.91,241.30 145.16,241.30 145.41,241.30 145.66,241.30 145.91,241.30 146.16,241.30 146.41,241.30 146.66,241.43 146.91,241.58 147.16,241.76 147.41,241.98 147.66,242.23 147.91,242.53 148.16,242.90 148.41,243.35 148.66,243.91 148.91,244.61 149.16,245.50 149.41,246.63 149.66,248.08 149.91,249.91 150.16,252.18 150.41,254.83 150.66,257.56 150.91,259.74 151.16,260.60 151.41,259.74 151.66,257.56 151.91,254.83 152.16,252.18 152.41,249.91 152.66,248.08 152.91,246.63 153.16,245.50 153.41,244.61 153.66,243.91 153.91,243.35 154.16,242.90 154.41,242.53 154.66,242.23 154.91,241.98 155.16,241.76 155.41,241.58 155.66,241.43 155.91,241.30 156.16,241.30 156.41,241.30 156.66,241.30 156.91,241.30 157.16,241.30 157.41,241.30 157.66,241.30 157.91,241.30 158.16,241.30 158.41,241.30 158.66,241.30 158.91,241.30 159.16,241.30 159.41,241.30 159.66,241.32 159.91,241.42 160.16,241.53 160.41,241.66 160.66,241.82 160.91,242.01 161.16,242.24 161.41,242.52 161.66,242.86 161.91,243.28 162.16,243.81 162.41,244.48 162.66,245.34 162.91,246.44 163.16,247.82 163.41,249.52 163.66,251.47 163.91,253.41 164.16,254.86 164.41,255.27 164.66,254.47 164.91,252.83 165.16,250.90 165.41,249.11 165.66,247.63 165.91,246.48 166.16,245.63 166.41,245.03 166.66,244.64 166.91,244.44 167.16,244.42 167.41,244.57 167.66,244.90 167.91,245.39 168.16,245.97 168.41,246.52 168.66,246.80 168.91,246.65 169.16,246.09 169.41,245.37 169.66,244.61 169.91,243.93 170.16,243.37 170.41,242.93 170.66,242.58 170.91,242.31 171.16,242.10 171.41,241.93 171.66,241.79 171.91,241.68 172.16,241.59" fill="none" stroke="#e28430" stroke-width="0.88" stroke-linejoin="round"/>
<polyline points="58.24,236.30 58.49,236.30 58.74,236.30 58.99,236.30 59.24,236.30 59.49,236.30 59.74,236.30 59.99,236.30 60.24,236.30 60.49,236.30 60.74,236.30 60.99,236.30 61.24,236.30 61.49,236.30 61.74,236.30 61.99,236.30 62.24,236.30 62.49,236.30 62.74,236.30 62.99,236.30 63.24,236.30 63.49,236.30 63.74,236.30 63.99,236.30 64.24,236.30 64.49,236.30 64.74,236.33 64.99,236.45 65.24,236.60 65.49,236.80 65.74,237.06 65.99,237.41 66.24,237.90 66.49,238.58 66.74,239.56 66.99,240.97 67.24,242.91 67.49,245.19 67.74,246.84 67.99,246.63 68.24,244.74 68.49,242.49 68.74,240.65 68.99,239.33 69.24,238.42 69.49,237.79 69.74,237.33 69.99,237.00 70.24,236.76 70.49,236.57 70.74,236.42 70.99,236.31 71.24,236.30 71.49,236.30 71.74,236.30 71.99,236.30 72.24,236.30 72.49,236.30 72.74,236.30 72.99,236.30 73.24,236.30 73.49,236.30 73.74,236.30 73.99,236.30 74.24,236.30 74.49,236.30 74.74,236.30 74.99,236.30 75.24,236.30 75.49,236.30 75.74,236.30 75.99,236.30 76.24,236.30 76.49,236.30 76.74,236.30 76.99,236.30 77.24,236.30 77.49,236.30 77.74,236.30 77.99,236.30 78.24,236.30 78.49,236.30 78.74,236.30 78.99,236.30 79.24,236.30 79.49,236.30 79.74,236.30 79.99,236.30 80.24,236.30 80.49,236.30 80.74,236.30 80.99,236.30 81.24,236.30 81.49,236.30 81.74,236.30 81.99,236.30 82.24,236.30 82.49,236.30 82.74,236.30 82.99,236.30 83.24,236.30 83.49,236.30 83.74,236.30 83.99,236.30 84.24,236.30 84.49,236.30 84.74,236.30 84.99,236.30 85.24,236.30 85.49,236.30 85.74,236.30 85.99,236.30 86.24,236.30 86.49,236.30 86.74,236.30 86.99,236.30 87.24,236.30 87.49,236.30 87.74,236.30 87.99,236.30 88.24,236.30 88.49,236.30 88.74,236.30 88.99,236.30 89.24,236.30 89.49,236.30 89.74,236.30 89.99,236.30 90.24,236.30 90.49,236.30 90.74,236.30 90.99,236.30 91.24,236.30 91.49,236.30 91.74,236.30 91.99,236.30 92.24,236.30 92.49,236.30 92.74,236.30 92.99,236.30 93.24,236.30 93.49,236.30 93.74,236.30 93.99,236.30 94.24,236.30 94.49,236.30 94.74,236.30 94.99,236.30 95.24,236.30 95.49,236.30 95.74,236.30 95.99,236.30 96.24,236.30 96.49,236.30 96.74,236.30 96.99,236.30 97.24,236.30 97.49,236.30 97.74,236.30 97.99,236.30 98.24,236.30 98.49,236.30 98.74,236.30 98.99,236.30 99.24,236.30 99.49,236.30 99.74,236.30 99.99,236.30 100.24,236.30 100.49,236.30 100.74,236.30 100.99,236.30 101.24,236.30 101.49,236.30 101.74,236.30 101.99,236.30 102.24,236.30 102.49,236.30 102.74,236.30 102.99,236.30 103.24,236.30 103.49,236.30 103.74,236.30 103.99,236.30 104.24,236.30 104.49,236.30 104.74,236.30 104.99,236.30 105.24,236.30 105.49,236.30 105.74,236.30 105.99,236.30 106.24,236.30 106.49,236.30 106.74,236.30 106.99,236.30 107.24,236.30 107.49,236.30 107.74,236.30 107.99,236.30 108.24,236.30 108.49,236.30 108.74,236.30 108.99,236.30 109.24,236.30 109.49,236.30 109.74,236.30 109.99,236.30 110.24,236.30 110.49,236.30 110.74,236.30 110.99,236.30 111.24,236.30 111.49,236.30 111.74,236.30 111.99,236.30 112.24,236.30 112.49,236.30 112.74,236.30 112.99,236.30 113.24,236.30 113.49,236.30 113.74,236.30 113.99,236.30 114.24,236.30 114.49,236.30 114.74,236.30 114.99,236.30 115.24,236.30 115.49,236.30 115.74,236.30 115.99,236.31 116.24,236.32 116.49,236.34 116.74,236.35 116.99,236.38 117.24,236.40 117.49,236.44 117.74,236.48 117.99,236.53 118.24,236.59 118.49,236.66 118.74,236.76 118.99,236.89 119.24,237.05 119.49,237.25 119.74,237.49 119.99,237.76 120.24,238.02 120.49,238.20 120.74,238.22 120.99,238.07 121.24,237.82 121.49,237.54 121.74,237.29 121.99,237.08 122.24,236.92 122.49,236.78 122.74,236.68 122.99,236.60 123.24,236.54 123.49,236.49 123.74,236.44 123.99,236.41 124.24,236.38 124.49,236.36 124.74,236.34 124.99,236.32 125.24,236.31 125.49,236.30 125.74,236.30 125.99,236.30 126.24,236.30 126.49,236.30 126.74,236.30 126.99,236.30 127.24,236.30 127.49,236.31 127.74,236.35 127.99,236.39 128.24,236.43 128.49,236.49 128.74,236.55 128.99,236.63 129.24,236.73 129.49,236.85 129.74,237.00 129.99,237.19 130.24,237.43 130.49,237.73 130.74,238.12 130.99,238.61 131.24,239.21 131.49,239.88 131.74,240.52 131.99,240.94 132.24,240.98 132.49,240.62 132.74,240.01 132.99,239.34 133.24,238.73 133.49,238.21 133.74,237.81 133.99,237.48 134.24,237.23 134.49,237.04 134.74,236.88 134.99,236.75 135.24,236.65 135.49,236.57 135.74,236.53 135.99,236.50 136.24,236.49 136.49,236.49 136.74,236.51 136.99,236.55 137.24,236.63 137.49,236.72 137.74,236.84 137.99,236.98 138.24,237.16 138.49,237.40 138.74,237.69 138.99,238.07 139.24,238.54 139.49,239.08 139.74,239.64 139.99,240.09 140.24,240.27 140.49,240.09 140.74,239.64 140.99,239.08 141.24,238.54 141.49,238.07 141.74,237.69 141.99,237.40 142.24,237.16 142.49,236.98 142.74,236.84 142.99,236.72 143.24,236.63 143.49,236.55 143.74,236.49 143.99,236.44 144.24,236.40 144.49,236.36 144.74,236.33 144.99,236.30 145.24,236.30 145.49,236.30 145.74,236.30 145.99,236.30 146.24,236.30 146.49,236.30 146.74,236.30 146.99,236.30 147.24,236.30 147.49,236.30 147.74,236.30 147.99,236.30 148.24,236.30 148.49,236.30 148.74,236.30 148.99,236.30 149.24,236.30 149.49,236.30 149.74,236.35 149.99,236.41 150.24,236.49 150.49,236.57 150.74,236.67 150.99,236.79 151.24,236.94 151.49,237.12 151.74,237.34 151.99,237.63 152.24,237.98 152.49,238.43 152.74,239.01 152.99,239.75 153.24,240.65 153.49,241.71 153.74,242.80 153.99,243.68 154.24,244.02 154.49,243.68 154.74,242.80 154.99,241.71 155.24,240.65 155.49,239.75 155.74,239.01 155.99,238.43 156.24,237.98 156.49,237.63 156.74,237.34 156.99,237.12 157.24,236.94 157.49,236.79 157.74,236.67 157.99,236.57 158.24,236.49 158.49,236.41 158.74,236.35 158.99,236.30 159.24,236.30 159.49,236.30 159.74,236.30 159.99,236.30 160.24,236.30 160.49,236.30 160.74,236.30 160.99,236.30 161.24,236.30 161.49,236.30 161.74,236.30 161.99,236.30 162.24,236.30 162.49,236.30 162.74,236.31 162.99,236.35 163.24,236.39 163.49,236.45 163.74,236.51 163.99,236.58 164.24,236.68 164.49,236.79 164.74,236.92 164.99,237.09 165.24,237.30 165.49,237.57 165.74,237.92 165.99,238.35 166.24,238.91 166.49,239.59 166.74,240.37 166.99,241.14 167.24,241.72 167.49,241.89 167.74,241.57 167.99,240.91 168.24,240.14 168.49,239.43 168.74,238.83 168.99,238.37 169.24,238.03 169.49,237.79 169.74,237.64 169.99,237.56 170.24,237.55 170.49,237.61 170.74,237.74 170.99,237.93 171.24,238.17 171.49,238.39 171.74,238.50 171.99,238.44 172.24,238.22 172.49,237.93 172.74,237.62 172.99,237.35 173.24,237.13 173.49,236.95 173.74,236.81 173.99,236.70 174.24,236.62 174.49,236.55 174.74,236.50 174.99,236.45 175.24,236.42" fill="none" stroke="#dcb430" stroke-width="0.88" stroke-linejoin="round"/>
<polyline points="61.32,231.30 61.57,231.30 61.82,231.30 62.07,231.30 62.32,231.30 62.57,231.30 62.82,231.30 63.07,231.30 63.32,231.30 63.57,231.30 63.82,231.30 64.07,231.30 64.32,231.30 64.57,231.30 64.82,231.30 65.07,231.30 65.32,231.30 65.57,231.30 65.82,231.30 66.07,231.30 66.32,231.30 66.57,231.30 66.82,231.30 67.07,231.30 67.32,231.30 67.57,231.30 67.82,231.29 68.07,231.27 68.32,231.24 68.57,231.21 68.82,231.16 69.07,231.09 69.32,231.00 69.57,230.87 69.82,230.69 70.07,230.42 70.32,230.06 70.57,229.63 70.82,229.32 71.07,229.36 71.32,229.72 71.57,230.14 71.82,230.48 72.07,230.73 72.32,230.90 72.57,231.02 72.82,231.11 73.07,231.17 73.32,231.21 73.57,231.25 73.82,231.28 74.07,231.30 74.32,231.30 74.57,231.30 74.82,231.30 75.07,231.30 75.32,231.30 75.57,231.30 75.82,231.30 76.07,231.30 76.32,231.30 76.57,231.30 76.82,231.30 77.07,231.30 77.32,231.30 77.57,231.30 77.82,231.30 78.07,231.30 78.32,231.30 78.57,231.30 78.82,231.30 79.07,231.30 79.32,231.30 79.57,231.30 79.82,231.30 80.07,231.30 80.32,231.30 80.57,231.30 80.82,231.30 81.07,231.30 81.32,231.30 81.57,231.30 81.82,231.30 82.07,231.30 82.32,231.30 82.57,231.30 82.82,231.30 83.07,231.30 83.32,231.30 83.57,231.30 83.82,231.30 84.07,231.30 84.32,231.30 84.57,231.30 84.82,231.30 85.07,231.30 85.32,231.30 85.57,231.30 85.82,231.30 86.07,231.30 86.32,231.30 86.57,231.30 86.82,231.30 87.07,231.30 87.32,231.30 87.57,231.30 87.82,231.30 88.07,231.30 88.32,231.30 88.57,231.30 88.82,231.30 89.07,231.30 89.32,231.30 89.57,231.30 89.82,231.30 90.07,231.30 90.32,231.30 90.57,231.30 90.82,231.30 91.07,231.30 91.32,231.30 91.57,231.30 91.82,231.30 92.07,231.30 92.32,231.30 92.57,231.30 92.82,231.30 93.07,231.30 93.32,231.30 93.57,231.30 93.82,231.30 94.07,231.30 94.32,231.30 94.57,231.30 94.82,231.30 95.07,231.30 95.32,231.30 95.57,231.30 95.82,231.30 96.07,231.30 96.32,231.30 96.57,231.30 96.82,231.30 97.07,231.30 97.32,231.30 97.57,231.30 97.82,231.30 98.07,231.30 98.32,231.30 98.57,231.30 98.82,231.30 99.07,231.30 99.32,231.30 99.57,231.30 99.82,231.30 100.07,231.30 100.32,231.30 100.57,231.30 100.82,231.30 101.07,231.30 101.32,231.30 101.57,231.30 101.82,231.30 102.07,231.30 102.32,231.30 102.57,231.30 102.82,231.30 103.07,231.30 103.32,231.30 103.57,231.30 103.82,231.30 104.07,231.30 104.32,231.30 104.57,231.30 104.82,231.30 105.07,231.30 105.32,231.30 105.57,231.30 105.82,231.30 106.07,231.30 106.32,231.30 106.57,231.30 106.82,231.30 107.07,231.30 107.32,231.30 107.57,231.30 107.82,231.30 108.07,231.30 108.32,231.30 108.57,231.30 108.82,231.30 109.07,231.30 109.32,231.30 109.57,231.30 109.82,231.30 110.07,231.30 110.32,231.30 110.57,231.30 110.82,231.30 111.07,231.30 111.32,231.30 111.57,231.30 111.82,231.30 112.07,231.30 112.32,231.30 112.57,231.30 112.82,231.30 113.07,231.30 113.32,231.30 113.57,231.30 113.82,231.30 114.07,231.30 114.32,231.30 114.57,231.30 114.82,231.30 115.07,231.30 115.32,231.30 115.57,231.30 115.82,231.30 116.07,231.30 116.32,231.30 116.57,231.30 116.82,231.30 117.07,231.30 117.32,231.30 117.57,231.30 117.82,231.30 118.07,231.30 118.32,231.30 118.57,231.30 118.82,231.30 119.07,231.30 119.32,231.30 119.57,231.29 119.82,231.29 120.07,231.29 120.32,231.28 120.57,231.27 120.82,231.27 121.07,231.26 121.32,231.25 121.57,231.23 121.82,231.21 122.07,231.19 122.32,231.16 122.57,231.12 122.82,231.08 123.07,231.03 123.32,230.98 123.57,230.94 123.82,230.94 124.07,230.97 124.32,231.02 124.57,231.07 124.82,231.11 125.07,231.15 125.32,231.18 125.57,231.21 125.82,231.23 126.07,231.24 126.32,231.26 126.57,231.27 126.82,231.27 127.07,231.28 127.32,231.28 127.57,231.29 127.82,231.29 128.07,231.30 128.32,231.30 128.57,231.30 128.82,231.30 129.07,231.30 129.32,231.30 129.57,231.30 129.82,231.30 130.07,231.30 130.32,231.30 130.57,231.30 130.82,231.29 131.07,231.28 131.32,231.28 131.57,231.26 131.82,231.25 132.07,231.24 132.32,231.22 132.57,231.20 132.82,231.17 133.07,231.13 133.32,231.09 133.57,231.03 133.82,230.96 134.07,230.87 134.32,230.75 134.57,230.63 134.82,230.51 135.07,230.43 135.32,230.42 135.57,230.49 135.82,230.60 136.07,230.73 136.32,230.85 136.57,230.94 136.82,231.02 137.07,231.08 137.32,231.12 137.57,231.16 137.82,231.19 138.07,231.21 138.32,231.23 138.57,231.25 138.82,231.26 139.07,231.26 139.32,231.26 139.57,231.26 139.82,231.26 140.07,231.25 140.32,231.24 140.57,231.22 140.82,231.20 141.07,231.17 141.32,231.14 141.57,231.09 141.82,231.04 142.07,230.97 142.32,230.88 142.57,230.78 142.82,230.67 143.07,230.59 143.32,230.56 143.57,230.59 143.82,230.67 144.07,230.78 144.32,230.88 144.57,230.97 144.82,231.04 145.07,231.09 145.32,231.14 145.57,231.17 145.82,231.20 146.07,231.22 146.32,231.24 146.57,231.25 146.82,231.26 147.07,231.27 147.32,231.28 147.57,231.29 147.82,231.29 148.07,231.30 148.32,231.30 148.57,231.30 148.82,231.30 149.07,231.30 149.32,231.30 149.57,231.30 149.82,231.30 150.07,231.30 150.32,231.30 150.57,231.30 150.82,231.30 151.07,231.30 151.32,231.30 151.57,231.30 151.82,231.30 152.07,231.30 152.32,231.30 152.57,231.30 152.82,231.29 153.07,231.28 153.32,231.27 153.57,231.25 153.82,231.23 154.07,231.21 154.32,231.18 154.57,231.15 154.82,231.10 155.07,231.05 155.32,230.98 155.57,230.90 155.82,230.79 156.07,230.65 156.32,230.48 156.57,230.29 156.82,230.08 157.07,229.92 157.32,229.85 157.57,229.92 157.82,230.08 158.07,230.29 158.32,230.48 158.57,230.65 158.82,230.79 159.07,230.90 159.32,230.98 159.57,231.05 159.82,231.10 160.07,231.15 160.32,231.18 160.57,231.21 160.82,231.23 161.07,231.25 161.32,231.27 161.57,231.28 161.82,231.29 162.07,231.30 162.32,231.30 162.57,231.30 162.82,231.30 163.07,231.30 163.32,231.30 163.57,231.30 163.82,231.30 164.07,231.30 164.32,231.30 164.57,231.30 164.82,231.30 165.07,231.30 165.32,231.30 165.57,231.30 165.82,231.30 166.07,231.29 166.32,231.28 166.57,231.27 166.82,231.26 167.07,231.25 167.32,231.23 167.57,231.21 167.82,231.18 168.07,231.15 168.32,231.11 168.57,231.06 168.82,231.00 169.07,230.91 169.32,230.81 169.57,230.68 169.82,230.54 170.07,230.39 170.32,230.28 170.57,230.25 170.82,230.31 171.07,230.44 171.32,230.58 171.57,230.71 171.82,230.83 172.07,230.91 172.32,230.98 172.57,231.02 172.82,231.05 173.07,231.06 173.32,231.07 173.57,231.05 173.82,231.03 174.07,230.99 174.32,230.95 174.57,230.91 174.82,230.89 175.07,230.90 175.32,230.94 175.57,231.00 175.82,231.05 176.07,231.10 176.32,231.14 176.57,231.18 176.82,231.20 177.07,231.22 177.32,231.24 177.57,231.25 177.82,231.26 178.07,231.27 178.32,231.28" fill="none" stroke="#aee030" stroke-width="0.88" stroke-linejoin="round"/>
<polyline points="64.40,226.30 64.65,226.30 64.90,226.30 65.15,226.30 65.40,226.30 65.65,226.30 65.90,226.30 66.15,226.30 66.40,226.30 66.65,226.30 66.90,226.30 67.15,226.30 67.40,226.30 67.65,226.30 67.90,226.30 68.15,226.30 68.40,226.30 68.65,226.30 68.90,226.30 69.15,226.30 69.40,226.30 69.65,226.30 69.90,226.30 70.15,226.30 70.40,226.30 70.65,226.30 70.90,226.27 71.15,226.16 71.40,226.01 71.65,225.82 71.90,225.56 72.15,225.22 72.40,224.75 72.65,224.09 72.90,223.14 73.15,221.77 73.40,219.89 73.65,217.69 73.90,216.08 74.15,216.29 74.40,218.12 74.65,220.31 74.90,222.09 75.15,223.36 75.40,224.24 75.65,224.86 75.90,225.30 76.15,225.62 76.40,225.86 76.65,226.04 76.90,226.18 77.15,226.29 77.40,226.30 77.65,226.30 77.90,226.30 78.15,226.30 78.40,226.30 78.65,226.30 78.90,226.30 79.15,226.30 79.40,226.30 79.65,226.30 79.90,226.30 80.15,226.30 80.40,226.30 80.65,226.30 80.90,226.30 81.15,226.30 81.40,226.30 81.65,226.30 81.90,226.30 82.15,226.30 82.40,226.30 82.65,226.30 82.90,226.30 83.15,226.30 83.40,226.30 83.65,226.30 83.90,226.30 84.15,226.30 84.40,226.30 84.65,226.30 84.90,226.30 85.15,226.30 85.40,226.30 85.65,226.30 85.90,226.30 86.15,226.30 86.40,226.30 86.65,226.30 86.90,226.30 87.15,226.30 87.40,226.30 87.65,226.30 87.90,226.30 88.15,226.30 88.40,226.30 88.65,226.30 88.90,226.30 89.15,226.30 89.40,226.30 89.65,226.30 89.90,226.30 90.15,226.30 90.40,226.30 90.65,226.30 90.90,226.30 91.15,226.30 91.40,226.30 91.65,226.30 91.90,226.30 92.15,226.30 92.40,226.30 92.65,226.30 92.90,226.30 93.15,226.30 93.40,226.30 93.65,226.30 93.90,226.30 94.15,226.30 94.40,226.30 94.65,226.30 94.90,226.30 95.15,226.30 95.40,226.30 95.65,226.30 95.90,226.30 96.15,226.30 96.40,226.30 96.65,226.30 96.90,226.30 97.15,226.30 97.40,226.30 97.65,226.30 97.90,226.30 98.15,226.30 98.40,226.30 98.65,226.30 98.90,226.30 99.15,226.30 99.40,226.30 99.65,226.30 99.90,226.30 100.15,226.30 100.40,226.30 100.65,226.30 100.90,226.30 101.15,226.30 101.40,226.30 101.65,226.30 101.90,226.30 102.15,226.30 102.40,226.30 102.65,226.30 102.90,226.30 103.15,226.30 103.40,226.30 103.65,226.30 103.90,226.30 104.15,226.30 104.40,226.30 104.65,226.30 104.90,226.30 105.15,226.30 105.40,226.30 105.65,226.30 105.90,226.30 106.15,226.30 106.40,226.30 106.65,226.30 106.90,226.30 107.15,226.30 107.40,226.30 107.65,226.30 107.90,226.30 108.15,226.30 108.40,226.30 108.65,226.30 108.90,226.30 109.15,226.30 109.40,226.30 109.65,226.30 109.90,226.30 110.15,226.30 110.40,226.30 110.65,226.30 110.90,226.30 111.15,226.30 111.40,226.30 111.65,226.30 111.90,226.30 112.15,226.30 112.40,226.30 112.65,226.30 112.90,226.30 113.15,226.30 113.40,226.30 113.65,226.30 113.90,226.30 114.15,226.30 114.40,226.30 114.65,226.30 114.90,226.30 115.15,226.30 115.40,226.30 115.65,226.30 115.90,226.30 116.15,226.30 116.40,226.30 116.65,226.30 116.90,226.30 117.15,226.30 117.40,226.30 117.65,226.30 117.90,226.30 118.15,226.30 118.40,226.30 118.65,226.30 118.90,226.30 119.15,226.30 119.40,226.30 119.65,226.30 119.90,226.30 120.15,226.30 120.40,226.30 120.65,226.30 120.90,226.30 121.15,226.30 121.40,226.30 121.65,226.30 121.90,226.30 122.15,226.30 122.40,226.28 122.65,226.27 122.90,226.25 123.15,226.23 123.40,226.20 123.65,226.17 123.90,226.13 124.15,226.08 124.40,226.02 124.65,225.95 124.90,225.85 125.15,225.73 125.40,225.58 125.65,225.38 125.90,225.15 126.15,224.88 126.40,224.63 126.65,224.46 126.90,224.44 127.15,224.59 127.40,224.83 127.65,225.10 127.90,225.34 128.15,225.54 128.40,225.70 128.65,225.83 128.90,225.93 129.15,226.01 129.40,226.07 129.65,226.12 129.90,226.16 130.15,226.19 130.40,226.22 130.65,226.24 130.90,226.26 131.15,226.28 131.40,226.29 131.65,226.30 131.90,226.30 132.15,226.30 132.40,226.30 132.65,226.30 132.90,226.30 133.15,226.30 133.40,226.30 133.65,226.29 133.90,226.26 134.15,226.22 134.40,226.17 134.65,226.12 134.90,226.05 135.15,225.98 135.40,225.88 135.65,225.76 135.90,225.62 136.15,225.44 136.40,225.21 136.65,224.91 136.90,224.53 137.15,224.06 137.40,223.48 137.65,222.83 137.90,222.22 138.15,221.81 138.40,221.76 138.65,222.11 138.90,222.70 139.15,223.35 139.40,223.95 139.65,224.45 139.90,224.84 140.15,225.15 140.40,225.40 140.65,225.59 140.90,225.74 141.15,225.86 141.40,225.96 141.65,226.04 141.90,226.08 142.15,226.10 142.40,226.12 142.65,226.11 142.90,226.10 143.15,226.05 143.40,225.98 143.65,225.89 143.90,225.78 144.15,225.64 144.40,225.46 144.65,225.24 144.90,224.95 145.15,224.58 145.40,224.13 145.65,223.61 145.90,223.06 146.15,222.63 146.40,222.46 146.65,222.63 146.90,223.06 147.15,223.61 147.40,224.13 147.65,224.58 147.90,224.95 148.15,225.24 148.40,225.46 148.65,225.64 148.90,225.78 149.15,225.89 149.40,225.98 149.65,226.05 149.90,226.12 150.15,226.17 150.40,226.21 150.65,226.24 150.90,226.27 151.15,226.30 151.40,226.30 151.65,226.30 151.90,226.30 152.15,226.30 152.40,226.30 152.65,226.30 152.90,226.30 153.15,226.30 153.40,226.30 153.65,226.30 153.90,226.30 154.15,226.30 154.40,226.30 154.65,226.30 154.90,226.30 155.15,226.30 155.40,226.30 155.65,226.30 155.90,226.25 156.15,226.19 156.40,226.12 156.65,226.04 156.90,225.94 157.15,225.82 157.40,225.68 157.65,225.50 157.90,225.29 158.15,225.02 158.40,224.67 158.65,224.23 158.90,223.67 159.15,222.96 159.40,222.08 159.65,221.06 159.90,220.00 160.15,219.15 160.40,218.82 160.65,219.15 160.90,220.00 161.15,221.06 161.40,222.08 161.65,222.96 161.90,223.67 162.15,224.23 162.40,224.67 162.65,225.02 162.90,225.29 163.15,225.50 163.40,225.68 163.65,225.82 163.90,225.94 164.15,226.04 164.40,226.12 164.65,226.19 164.90,226.25 165.15,226.30 165.40,226.30 165.65,226.30 165.90,226.30 166.15,226.30 166.40,226.30 166.65,226.30 166.90,226.30 167.15,226.30 167.40,226.30 167.65,226.30 167.90,226.30 168.15,226.30 168.40,226.30 168.65,226.30 168.90,226.29 169.15,226.26 169.40,226.21 169.65,226.16 169.90,226.10 170.15,226.02 170.40,225.94 170.65,225.83 170.90,225.70 171.15,225.53 171.40,225.33 171.65,225.07 171.90,224.73 172.15,224.31 172.40,223.77 172.65,223.11 172.90,222.36 173.15,221.61 173.40,221.05 173.65,220.89 173.90,221.20 174.15,221.83 174.40,222.58 174.65,223.27 174.90,223.85 175.15,224.29 175.40,224.62 175.65,224.85 175.90,225.00 176.15,225.08 176.40,225.09 176.65,225.03 176.90,224.91 177.15,224.72 177.40,224.49 177.65,224.28 177.90,224.17 178.15,224.23 178.40,224.44 178.65,224.72 178.90,225.02 179.15,225.28 179.40,225.50 179.65,225.67 179.90,225.80 180.15,225.91 180.40,225.99 180.65,226.06 180.90,226.11 181.15,226.15 181.40,226.19" fill="none" stroke="#58e030" stroke-width="0.88" stroke-linejoin="round"/>
<polyline points="67.48,221.30 67.73,221.30 67.98,221.30 68.23,221.30 68.48,221.30 68.73,221.30 68.98,221.30 69.23,221.30 69.48,221.30 69.73,221.30 69.98,221.30 70.23,221.30 70.48,221.30 70.73,221.30 70.98,221.30 71.23,221.30 71.48,221.30 71.73,221.30 71.98,221.30 72.23,221.30 72.48,221.30 72.73,221.30 72.98,221.30 73.23,221.30 73.48,221.30 73.73,221.30 73.98,221.25 74.23,221.04 74.48,220.77 74.73,220.42 74.98,219.97 75.23,219.35 75.48,218.51 75.73,217.31 75.98,215.59 76.23,213.12 76.48,209.72 76.73,205.75 76.98,202.85 77.23,203.22 77.48,206.53 77.73,210.48 77.98,213.69 78.23,215.99 78.48,217.58 78.73,218.70 78.98,219.49 79.23,220.07 79.48,220.50 79.73,220.83 79.98,221.09 80.23,221.29 80.48,221.30 80.73,221.30 80.98,221.30 81.23,221.30 81.48,221.30 81.73,221.30 81.98,221.30 82.23,221.30 82.48,221.30 82.73,221.30 82.98,221.30 83.23,221.30 83.48,221.30 83.73,221.30 83.98,221.30 84.23,221.30 84.48,221.30 84.73,221.30 84.98,221.30 85.23,221.30 85.48,221.30 85.73,221.30 85.98,221.30 86.23,221.30 86.48,221.30 86.73,221.30 86.98,221.30 87.23,221.30 87.48,221.30 87.73,221.30 87.98,221.30 88.23,221.30 88.48,221.30 88.73,221.30 88.98,221.30 89.23,221.30 89.48,221.30 89.73,221.30 89.98,221.30 90.23,221.30 90.48,221.30 90.73,221.30 90.98,221.30 91.23,221.30 91.48,221.30 91.73,221.30 91.98,221.30 92.23,221.30 92.48,221.30 92.73,221.30 92.98,221.30 93.23,221.30 93.48,221.30 93.73,221.30 93.98,221.30 94.23,221.30 94.48,221.30 94.73,221.30 94.98,221.30 95.23,221.30 95.48,221.30 95.73,221.30 95.98,221.30 96.23,221.30 96.48,221.30 96.73,221.30 96.98,221.30 97.23,221.30 97.48,221.30 97.73,221.30 97.98,221.30 98.23,221.30 98.48,221.30 98.73,221.30 98.98,221.30 99.23,221.30 99.48,221.30 99.73,221.30 99.98,221.30 100.23,221.30 100.48,221.30 100.73,221.30 100.98,221.30 101.23,221.30 101.48,221.30 101.73,221.30 101.98,221.30 102.23,221.30 102.48,221.30 102.73,221.30 102.98,221.30 103.23,221.30 103.48,221.30 103.73,221.30 103.98,221.30 104.23,221.30 104.48,221.30 104.73,221.30 104.98,221.30 105.23,221.30 105.48,221.30 105.73,221.30 105.98,221.30 106.23,221.30 106.48,221.30 106.73,221.30 106.98,221.30 107.23,221.30 107.48,221.30 107.73,221.30 107.98,221.30 108.23,221.30 108.48,221.30 108.73,221.30 108.98,221.30 109.23,221.30 109.48,221.30 109.73,221.30 109.98,221.30 110.23,221.30 110.48,221.30 110.73,221.30 110.98,221.30 111.23,221.30 111.48,221.30 111.73,221.30 111.98,221.30 112.23,221.30 112.48,221.30 112.73,221.30 112.98,221.30 113.23,221.30 113.48,221.30 113.73,221.30 113.98,221.30 114.23,221.30 114.48,221.30 114.73,221.30 114.98,221.30 115.23,221.30 115.48,221.30 115.73,221.30 115.98,221.30 116.23,221.30 116.48,221.30 116.73,221.30 116.98,221.30 117.23,221.30 117.48,221.30 117.73,221.30 117.98,221.30 118.23,221.30 118.48,221.30 118.73,221.30 118.98,221.30 119.23,221.30 119.48,221.30 119.73,221.30 119.98,221.30 120.23,221.30 120.48,221.30 120.73,221.30 120.98,221.30 121.23,221.30 121.48,221.30 121.73,221.30 121.98,221.30 122.23,221.30 122.48,221.30 122.73,221.30 122.98,221.30 123.23,221.30 123.48,221.30 123.73,221.30 123.98,221.30 124.23,221.30 124.48,221.30 124.73,221.30 124.98,221.30 125.23,221.29 125.48,221.27 125.73,221.24 125.98,221.20 126.23,221.17 126.48,221.12 126.73,221.06 126.98,220.99 127.23,220.90 127.48,220.80 127.73,220.66 127.98,220.49 128.23,220.27 128.48,219.99 128.73,219.64 128.98,219.22 129.23,218.74 129.48,218.28 129.73,217.98 129.98,217.95 130.23,218.20 130.48,218.64 130.73,219.12 130.98,219.56 131.23,219.93 131.48,220.22 131.73,220.45 131.98,220.63 132.23,220.77 132.48,220.88 132.73,220.97 132.98,221.05 133.23,221.11 133.48,221.16 133.73,221.20 133.98,221.23 134.23,221.26 134.48,221.29 134.73,221.30 134.98,221.30 135.23,221.30 135.48,221.30 135.73,221.30 135.98,221.30 136.23,221.30 136.48,221.30 136.73,221.28 136.98,221.22 137.23,221.15 137.48,221.07 137.73,220.97 137.98,220.85 138.23,220.71 138.48,220.54 138.73,220.33 138.98,220.07 139.23,219.74 139.48,219.32 139.73,218.79 139.98,218.11 140.23,217.25 140.48,216.21 140.73,215.04 140.98,213.92 141.23,213.18 141.48,213.11 141.73,213.73 141.98,214.80 142.23,215.98 142.48,217.06 142.73,217.95 142.98,218.67 143.23,219.23 143.48,219.67 143.73,220.01 143.98,220.28 144.23,220.50 144.48,220.68 144.73,220.83 144.98,220.90 145.23,220.95 145.48,220.97 145.73,220.96 145.98,220.93 146.23,220.86 146.48,220.72 146.73,220.56 146.98,220.36 147.23,220.11 147.48,219.79 147.73,219.38 147.98,218.86 148.23,218.20 148.48,217.39 148.73,216.43 148.98,215.45 149.23,214.67 149.48,214.36 149.73,214.67 149.98,215.45 150.23,216.43 150.48,217.39 150.73,218.20 150.98,218.86 151.23,219.38 151.48,219.79 151.73,220.11 151.98,220.36 152.23,220.56 152.48,220.72 152.73,220.86 152.98,220.97 153.23,221.06 153.48,221.13 153.73,221.20 153.98,221.25 154.23,221.30 154.48,221.30 154.73,221.30 154.98,221.30 155.23,221.30 155.48,221.30 155.73,221.30 155.98,221.30 156.23,221.30 156.48,221.30 156.73,221.30 156.98,221.30 157.23,221.30 157.48,221.30 157.73,221.30 157.98,221.30 158.23,221.30 158.48,221.30 158.73,221.30 158.98,221.21 159.23,221.10 159.48,220.98 159.73,220.83 159.98,220.65 160.23,220.44 160.48,220.18 160.73,219.86 160.98,219.47 161.23,218.98 161.48,218.36 161.73,217.57 161.98,216.55 162.23,215.27 162.48,213.68 162.73,211.83 162.98,209.92 163.23,208.39 163.48,207.79 163.73,208.39 163.98,209.92 164.23,211.83 164.48,213.68 164.73,215.27 164.98,216.55 165.23,217.57 165.48,218.36 165.73,218.98 165.98,219.47 166.23,219.86 166.48,220.18 166.73,220.44 166.98,220.65 167.23,220.83 167.48,220.98 167.73,221.10 167.98,221.21 168.23,221.30 168.48,221.30 168.73,221.30 168.98,221.30 169.23,221.30 169.48,221.30 169.73,221.30 169.98,221.30 170.23,221.30 170.48,221.30 170.73,221.30 170.98,221.30 171.23,221.30 171.48,221.30 171.73,221.30 171.98,221.29 172.23,221.22 172.48,221.14 172.73,221.05 172.98,220.93 173.23,220.80 173.48,220.64 173.73,220.45 173.98,220.21 174.23,219.91 174.48,219.54 174.73,219.07 174.98,218.47 175.23,217.70 175.48,216.73 175.73,215.54 175.98,214.18 176.23,212.82 176.48,211.81 176.73,211.52 176.98,212.08 177.23,213.23 177.48,214.58 177.73,215.83 177.98,216.87 178.23,217.67 178.48,218.27 178.73,218.69 178.98,218.96 179.23,219.10 179.48,219.11 179.73,219.01 179.98,218.78 180.23,218.44 180.48,218.03 180.73,217.65 180.98,217.45 181.23,217.56 181.48,217.95 181.73,218.45 181.98,218.98 182.23,219.46 182.48,219.85 182.73,220.16 182.98,220.40 183.23,220.59 183.48,220.74 183.73,220.86 183.98,220.96 184.23,221.03 184.48,221.10" fill="none" stroke="#30e052" stroke-width="0.88" stroke-linejoin="round"/>
<polyline points="70.56,216.30 70.81,216.30 71.06,216.30 71.31,216.30 71.56,216.30 71.81,216.30 72.06,216.30 72.31,216.30 72.56,216.30 72.81,216.30 73.06,216.30 73.31,216.30 73.56,216.30 73.81,216.30 74.06,216.30 74.31,216.30 74.56,216.30 74.81,216.30 75.06,216.30 75.31,216.30 75.56,216.30 75.81,216.30 76.06,216.30 76.31,216.30 76.56,216.30 76.81,216.30 77.06,216.23 77.31,215.94 77.56,215.56 77.81,215.08 78.06,214.44 78.31,213.59 78.56,212.41 78.81,210.74 79.06,208.35 79.31,204.91 79.56,200.18 79.81,194.64 80.06,190.60 80.31,191.11 80.56,195.73 80.81,201.22 81.06,205.70 81.31,208.90 81.56,211.13 81.81,212.68 82.06,213.78 82.31,214.59 82.56,215.19 82.81,215.65 83.06,216.00 83.31,216.28 83.56,216.30 83.81,216.30 84.06,216.30 84.31,216.30 84.56,216.30 84.81,216.30 85.06,216.30 85.31,216.30 85.56,216.30 85.81,216.30 86.06,216.30 86.31,216.30 86.56,216.30 86.81,216.30 87.06,216.30 87.31,216.30 87.56,216.30 87.81,216.30 88.06,216.30 88.31,216.30 88.56,216.30 88.81,216.30 89.06,216.30 89.31,216.30 89.56,216.30 89.81,216.30 90.06,216.30 90.31,216.30 90.56,216.30 90.81,216.30 91.06,216.30 91.31,216.30 91.56,216.30 91.81,216.30 92.06,216.30 92.31,216.30 92.56,216.30 92.81,216.30 93.06,216.30 93.31,216.30 93.56,216.30 93.81,216.30 94.06,216.30 94.31,216.30 94.56,216.30 94.81,216.30 95.06,216.30 95.31,216.30 95.56,216.30 95.81,216.30 96.06,216.30 96.31,216.30 96.56,216.30 96.81,216.30 97.06,216.30 97.31,216.30 97.56,216.30 97.81,216.30 98.06,216.30 98.31,216.30 98.56,216.30 98.81,216.30 99.06,216.30 99.31,216.30 99.56,216.30 99.81,216.30 100.06,216.30 100.31,216.30 100.56,216.30 100.81,216.30 101.06,216.30 101.31,216.30 101.56,216.30 101.81,216.30 102.06,216.30 102.31,216.30 102.56,216.30 102.81,216.30 103.06,216.30 103.31,216.30 103.56,216.30 103.81,216.30 104.06,216.30 104.31,216.30 104.56,216.30 104.81,216.30 105.06,216.30 105.31,216.30 105.56,216.30 105.81,216.30 106.06,216.30 106.31,216.30 106.56,216.30 106.81,216.30 107.06,216.30 107.31,216.30 107.56,216.30 107.81,216.30 108.06,216.30 108.31,216.30 108.56,216.30 108.81,216.30 109.06,216.30 109.31,216.30 109.56,216.30 109.81,216.30 110.06,216.30 110.31,216.30 110.56,216.30 110.81,216.30 111.06,216.30 111.31,216.30 111.56,216.30 111.81,216.30 112.06,216.30 112.31,216.30 112.56,216.30 112.81,216.30 113.06,216.30 113.31,216.30 113.56,216.30 113.81,216.30 114.06,216.30 114.31,216.30 114.56,216.30 114.81,216.30 115.06,216.30 115.31,216.30 115.56,216.30 115.81,216.30 116.06,216.30 116.31,216.30 116.56,216.30 116.81,216.30 117.06,216.30 117.31,216.30 117.56,216.30 117.81,216.30 118.06,216.30 118.31,216.30 118.56,216.30 118.81,216.30 119.06,216.30 119.31,216.30 119.56,216.30 119.81,216.30 120.06,216.30 120.31,216.30 120.56,216.30 120.81,216.30 121.06,216.30 121.31,216.30 121.56,216.30 121.81,216.30 122.06,216.30 122.31,216.30 122.56,216.30 122.81,216.30 123.06,216.30 123.31,216.30 123.56,216.30 123.81,216.30 124.06,216.30 124.31,216.30 124.56,216.30 124.81,216.30 125.06,216.30 125.31,216.30 125.56,216.30 125.81,216.30 126.06,216.30 126.31,216.30 126.56,216.30 126.81,216.30 127.06,216.30 127.31,216.30 127.56,216.30 127.81,216.30 128.06,216.30 128.31,216.29 128.56,216.25 128.81,216.21 129.06,216.17 129.31,216.11 129.56,216.05 129.81,215.97 130.06,215.87 130.31,215.75 130.56,215.60 130.81,215.41 131.06,215.17 131.31,214.87 131.56,214.48 131.81,213.99 132.06,213.40 132.31,212.73 132.56,212.10 132.81,211.67 133.06,211.63 133.31,211.99 133.56,212.60 133.81,213.27 134.06,213.88 134.31,214.39 134.56,214.80 134.81,215.12 135.06,215.37 135.31,215.57 135.56,215.72 135.81,215.85 136.06,215.95 136.31,216.03 136.56,216.10 136.81,216.16 137.06,216.21 137.31,216.25 137.56,216.28 137.81,216.30 138.06,216.30 138.31,216.30 138.56,216.30 138.81,216.30 139.06,216.30 139.31,216.30 139.56,216.30 139.81,216.27 140.06,216.19 140.31,216.09 140.56,215.98 140.81,215.84 141.06,215.68 141.31,215.48 141.56,215.25 141.81,214.95 142.06,214.59 142.31,214.13 142.56,213.55 142.81,212.80 143.06,211.85 143.31,210.66 143.56,209.21 143.81,207.58 144.06,206.03 144.31,204.99 144.56,204.89 144.81,205.76 145.06,207.25 145.31,208.89 145.56,210.39 145.81,211.64 146.06,212.63 146.31,213.41 146.56,214.02 146.81,214.50 147.06,214.89 147.31,215.19 147.56,215.44 147.81,215.64 148.06,215.75 148.31,215.81 148.56,215.84 148.81,215.83 149.06,215.79 149.31,215.68 149.56,215.50 149.81,215.27 150.06,214.99 150.31,214.64 150.56,214.19 150.81,213.63 151.06,212.90 151.31,211.98 151.56,210.85 151.81,209.52 152.06,208.15 152.31,207.06 152.56,206.63 152.81,207.06 153.06,208.15 153.31,209.52 153.56,210.85 153.81,211.98 154.06,212.90 154.31,213.63 154.56,214.19 154.81,214.64 155.06,214.99 155.31,215.27 155.56,215.50 155.81,215.68 156.06,215.84 156.31,215.96 156.56,216.07 156.81,216.16 157.06,216.23 157.31,216.30 157.56,216.30 157.81,216.30 158.06,216.30 158.31,216.30 158.56,216.30 158.81,216.30 159.06,216.30 159.31,216.30 159.56,216.30 159.81,216.30 160.06,216.30 160.31,216.30 160.56,216.30 160.81,216.30 161.06,216.30 161.31,216.30 161.56,216.30 161.81,216.30 162.06,216.17 162.31,216.02 162.56,215.85 162.81,215.64 163.06,215.40 163.31,215.10 163.56,214.74 163.81,214.30 164.06,213.75 164.31,213.07 164.56,212.20 164.81,211.10 165.06,209.69 165.31,207.90 165.56,205.69 165.81,203.11 166.06,200.45 166.31,198.32 166.56,197.49 166.81,198.32 167.06,200.45 167.31,203.11 167.56,205.69 167.81,207.90 168.06,209.69 168.31,211.10 168.56,212.20 168.81,213.07 169.06,213.75 169.31,214.30 169.56,214.74 169.81,215.10 170.06,215.40 170.31,215.64 170.56,215.85 170.81,216.02 171.06,216.17 171.31,216.30 171.56,216.30 171.81,216.30 172.06,216.30 172.31,216.30 172.56,216.30 172.81,216.30 173.06,216.30 173.31,216.30 173.56,216.30 173.81,216.30 174.06,216.30 174.31,216.30 174.56,216.30 174.81,216.30 175.06,216.28 175.31,216.19 175.56,216.08 175.81,215.95 176.06,215.79 176.31,215.61 176.56,215.39 176.81,215.12 177.06,214.78 177.31,214.37 177.56,213.85 177.81,213.20 178.06,212.36 178.31,211.29 178.56,209.94 178.81,208.28 179.06,206.38 179.31,204.49 179.56,203.08 179.81,202.68 180.06,203.46 180.31,205.06 180.56,206.94 180.81,208.68 181.06,210.13 181.31,211.25 181.56,212.08 181.81,212.66 182.06,213.04 182.31,213.23 182.56,213.26 182.81,213.11 183.06,212.79 183.31,212.32 183.56,211.74 183.81,211.21 184.06,210.94 184.31,211.09 184.56,211.63 184.81,212.34 185.06,213.08 185.31,213.74 185.56,214.28 185.81,214.71 186.06,215.05 186.31,215.31 186.56,215.52 186.81,215.69 187.06,215.82 187.31,215.93 187.56,216.02 187.81,216.09" fill="none" stroke="#30e0ac" stroke-width="0.88" stroke-linejoin="round"/>
<polyline points="73.64,211.30 73.89,211.30 74.14,211.30 74.39,211.30 74.64,211.30 74.89,211.30 75.14,211.30 75.39,211.30 75.64,211.30 75.89,211.30 76.14,211.30 76.39,211.30 76.64,211.30 76.89,211.30 77.14,211.30 77.39,211.30 77.64,211.30 77.89,211.30 78.14,211.30 78.39,211.30 78.64,211.30 78.89,211.30 79.14,211.30 79.39,211.30 79.64,211.30 79.89,211.30 80.14,211.19 80.39,210.71 80.64,210.10 80.89,209.32 81.14,208.28 81.39,206.89 81.64,204.96 81.89,202.25 82.14,198.36 82.39,192.76 82.64,185.05 82.89,176.03 83.14,169.45 83.39,170.29 83.64,177.81 83.89,186.75 84.14,194.04 84.39,199.26 84.64,202.87 84.89,205.40 85.14,207.20 85.39,208.51 85.64,209.49 85.89,210.24 86.14,210.81 86.39,211.27 86.64,211.30 86.89,211.30 87.14,211.30 87.39,211.30 87.64,211.30 87.89,211.30 88.14,211.30 88.39,211.30 88.64,211.30 88.89,211.30 89.14,211.30 89.39,211.30 89.64,211.30 89.89,211.30 90.14,211.30 90.39,211.30 90.64,211.30 90.89,211.30 91.14,211.30 91.39,211.30 91.64,211.30 91.89,211.30 92.14,211.30 92.39,211.30 92.64,211.30 92.89,211.30 93.14,211.30 93.39,211.30 93.64,211.30 93.89,211.30 94.14,211.30 94.39,211.30 94.64,211.30 94.89,211.30 95.14,211.30 95.39,211.30 95.64,211.30 95.89,211.30 96.14,211.30 96.39,211.30 96.64,211.30 96.89,211.30 97.14,211.30 97.39,211.30 97.64,211.30 97.89,211.30 98.14,211.30 98.39,211.30 98.64,211.30 98.89,211.30 99.14,211.30 99.39,211.30 99.64,211.30 99.89,211.30 100.14,211.30 100.39,211.30 100.64,211.30 100.89,211.30 101.14,211.30 101.39,211.30 101.64,211.30 101.89,211.30 102.14,211.30 102.39,211.30 102.64,211.30 102.89,211.30 103.14,211.30 103.39,211.30 103.64,211.30 103.89,211.30 104.14,211.30 104.39,211.30 104.64,211.30 104.89,211.30 105.14,211.30 105.39,211.30 105.64,211.30 105.89,211.30 106.14,211.30 106.39,211.30 106.64,211.30 106.89,211.30 107.14,211.30 107.39,211.30 107.64,211.30 107.89,211.30 108.14,211.30 108.39,211.30 108.64,211.30 108.89,211.30 109.14,211.30 109.39,211.30 109.64,211.30 109.89,211.30 110.14,211.30 110.39,211.30 110.64,211.30 110.89,211.30 111.14,211.30 111.39,211.30 111.64,211.30 111.89,211.30 112.14,211.30 112.39,211.30 112.64,211.30 112.89,211.30 113.14,211.30 113.39,211.30 113.64,211.30 113.89,211.30 114.14,211.30 114.39,211.30 114.64,211.30 114.89,211.30 115.14,211.30 115.39,211.30 115.64,211.30 115.89,211.30 116.14,211.30 116.39,211.30 116.64,211.30 116.89,211.30 117.14,211.30 117.39,211.30 117.64,211.30 117.89,211.30 118.14,211.30 118.39,211.30 118.64,211.30 118.89,211.30 119.14,211.30 119.39,211.30 119.64,211.30 119.89,211.30 120.14,211.30 120.39,211.30 120.64,211.30 120.89,211.30 121.14,211.30 121.39,211.30 121.64,211.30 121.89,211.30 122.14,211.30 122.39,211.30 122.64,211.30 122.89,211.30 123.14,211.30 123.39,211.30 123.64,211.30 123.89,211.30 124.14,211.30 124.39,211.30 124.64,211.30 124.89,211.30 125.14,211.30 125.39,211.30 125.64,211.30 125.89,211.30 126.14,211.30 126.39,211.30 126.64,211.30 126.89,211.30 127.14,211.30 127.39,211.30 127.64,211.30 127.89,211.30 128.14,211.30 128.39,211.30 128.64,211.30 128.89,211.30 129.14,211.30 129.39,211.30 129.64,211.30 129.89,211.30 130.14,211.30 130.39,211.30 130.64,211.30 130.89,211.30 131.14,211.30 131.39,211.28 131.64,211.22 131.89,211.16 132.14,211.08 132.39,210.99 132.64,210.89 132.89,210.76 133.14,210.60 133.39,210.40 133.64,210.16 133.89,209.85 134.14,209.47 134.39,208.97 134.64,208.34 134.89,207.54 135.14,206.57 135.39,205.49 135.64,204.46 135.89,203.77 136.14,203.70 136.39,204.28 136.64,205.27 136.89,206.36 137.14,207.36 137.39,208.19 137.64,208.86 137.89,209.38 138.14,209.78 138.39,210.10 138.64,210.36 138.89,210.56 139.14,210.73 139.39,210.86 139.64,210.97 139.89,211.07 140.14,211.15 140.39,211.21 140.64,211.27 140.89,211.30 141.14,211.30 141.39,211.30 141.64,211.30 141.89,211.30 142.14,211.30 142.39,211.30 142.64,211.30 142.89,211.25 143.14,211.12 143.39,210.96 143.64,210.77 143.89,210.55 144.14,210.29 144.39,209.97 144.64,209.58 144.89,209.11 145.14,208.51 145.39,207.76 145.64,206.82 145.89,205.61 146.14,204.06 146.39,202.11 146.64,199.75 146.89,197.10 147.14,194.57 147.39,192.89 147.64,192.72 147.89,194.14 148.14,196.56 148.39,199.23 148.64,201.67 148.89,203.70 149.14,205.33 149.39,206.60 149.64,207.59 149.89,208.38 150.14,209.00 150.39,209.50 150.64,209.90 150.89,210.23 151.14,210.40 151.39,210.50 151.64,210.55 151.89,210.54 152.14,210.47 152.39,210.30 152.64,209.99 152.89,209.63 153.14,209.17 153.39,208.60 153.64,207.87 153.89,206.95 154.14,205.77 154.39,204.27 154.64,202.42 154.89,200.26 155.14,198.04 155.39,196.25 155.64,195.56 155.89,196.25 156.14,198.04 156.39,200.26 156.64,202.42 156.89,204.27 157.14,205.77 157.39,206.95 157.64,207.87 157.89,208.60 158.14,209.17 158.39,209.63 158.64,209.99 158.89,210.30 159.14,210.54 159.39,210.75 159.64,210.92 159.89,211.07 160.14,211.19 160.39,211.30 160.64,211.30 160.89,211.30 161.14,211.30 161.39,211.30 161.64,211.30 161.89,211.30 162.14,211.30 162.39,211.30 162.64,211.30 162.89,211.30 163.14,211.30 163.39,211.30 163.64,211.30 163.89,211.30 164.14,211.30 164.39,211.30 164.64,211.30 164.89,211.30 165.14,211.09 165.39,210.85 165.64,210.56 165.89,210.23 166.14,209.83 166.39,209.35 166.64,208.76 166.89,208.04 167.14,207.15 167.39,206.04 167.64,204.63 167.89,202.83 168.14,200.54 168.39,197.63 168.64,194.02 168.89,189.82 169.14,185.49 169.39,182.02 169.64,180.67 169.89,182.02 170.14,185.49 170.39,189.82 170.64,194.02 170.89,197.63 171.14,200.54 171.39,202.83 171.64,204.63 171.89,206.04 172.14,207.15 172.39,208.04 172.64,208.76 172.89,209.35 173.14,209.83 173.39,210.23 173.64,210.56 173.89,210.85 174.14,211.09 174.39,211.30 174.64,211.30 174.89,211.30 175.14,211.30 175.39,211.30 175.64,211.30 175.89,211.30 176.14,211.30 176.39,211.30 176.64,211.30 176.89,211.30 177.14,211.30 177.39,211.30 177.64,211.30 177.89,211.30 178.14,211.27 178.39,211.12 178.64,210.94 178.89,210.72 179.14,210.47 179.39,210.17 179.64,209.81 179.89,209.37 180.14,208.83 180.39,208.16 180.64,207.32 180.89,206.25 181.14,204.89 181.39,203.15 181.64,200.94 181.89,198.24 182.14,195.15 182.39,192.08 182.64,189.78 182.89,189.12 183.14,190.39 183.39,193.00 183.64,196.06 183.89,198.90 184.14,201.25 184.39,203.07 184.64,204.42 184.89,205.38 185.14,205.99 185.39,206.31 185.64,206.34 185.89,206.10 186.14,205.59 186.39,204.81 186.64,203.88 186.89,203.01 187.14,202.57 187.39,202.81 187.64,203.70 187.89,204.84 188.14,206.05 188.39,207.12 188.64,208.01 188.89,208.71 189.14,209.26 189.39,209.69 189.64,210.03 189.89,210.30 190.14,210.52 190.39,210.70 190.64,210.84 190.89,210.96" fill="none" stroke="#30d6e0" stroke-width="0.88" stroke-linejoin="round"/>
<polyline points="76.72,206.30 76.97,206.30 77.22,206.30 77.47,206.30 77.72,206.30 77.97,206.30 78.22,206.30 78.47,206.30 78.72,206.30 78.97,206.30 79.22,206.30 79.47,206.30 79.72,206.30 79.97,206.30 80.22,206.30 80.47,206.30 80.72,206.30 80.97,206.30 81.22,206.30 81.47,206.30 81.72,206.30 81.97,206.30 82.22,206.30 82.47,206.30 82.72,206.30 82.97,206.30 83.22,206.17 83.47,205.58 83.72,204.84 83.97,203.88 84.22,202.61 84.47,200.91 84.72,198.57 84.97,195.26 85.22,190.50 85.47,183.67 85.72,174.26 85.97,163.25 86.22,155.22 86.47,156.25 86.72,165.42 86.97,176.34 87.22,185.23 87.47,191.60 87.72,196.02 87.97,199.10 88.22,201.30 88.47,202.90 88.72,204.09 88.97,205.00 89.22,205.71 89.47,206.27 89.72,206.30 89.97,206.30 90.22,206.30 90.47,206.30 90.72,206.30 90.97,206.30 91.22,206.30 91.47,206.30 91.72,206.30 91.97,206.30 92.22,206.30 92.47,206.30 92.72,206.30 92.97,206.30 93.22,206.30 93.47,206.30 93.72,206.30 93.97,206.30 94.22,206.30 94.47,206.30 94.72,206.30 94.97,206.30 95.22,206.30 95.47,206.30 95.72,206.30 95.97,206.30 96.22,206.30 96.47,206.30 96.72,206.30 96.97,206.30 97.22,206.30 97.47,206.30 97.72,206.30 97.97,206.30 98.22,206.30 98.47,206.30 98.72,206.30 98.97,206.30 99.22,206.30 99.47,206.30 99.72,206.30 99.97,206.30 100.22,206.30 100.47,206.30 100.72,206.30 100.97,206.30 101.22,206.30 101.47,206.30 101.72,206.30 101.97,206.30 102.22,206.30 102.47,206.30 102.72,206.30 102.97,206.30 103.22,206.30 103.47,206.30 103.72,206.30 103.97,206.30 104.22,206.30 104.47,206.30 104.72,206.30 104.97,206.30 105.22,206.30 105.47,206.30 105.72,206.30 105.97,206.30 106.22,206.30 106.47,206.30 106.72,206.30 106.97,206.30 107.22,206.30 107.47,206.30 107.72,206.30 107.97,206.30 108.22,206.30 108.47,206.30 108.72,206.30 108.97,206.30 109.22,206.30 109.47,206.30 109.72,206.30 109.97,206.30 110.22,206.30 110.47,206.30 110.72,206.30 110.97,206.30 111.22,206.30 111.47,206.30 111.72,206.30 111.97,206.30 112.22,206.30 112.47,206.30 112.72,206.30 112.97,206.30 113.22,206.30 113.47,206.30 113.72,206.30 113.97,206.30 114.22,206.30 114.47,206.30 114.72,206.30 114.97,206.30 115.22,206.30 115.47,206.30 115.72,206.30 115.97,206.30 116.22,206.30 116.47,206.30 116.72,206.30 116.97,206.30 117.22,206.30 117.47,206.30 117.72,206.30 117.97,206.30 118.22,206.30 118.47,206.30 118.72,206.30 118.97,206.30 119.22,206.30 119.47,206.30 119.72,206.30 119.97,206.30 120.22,206.30 120.47,206.30 120.72,206.30 120.97,206.30 121.22,206.30 121.47,206.30 121.72,206.30 121.97,206.30 122.22,206.30 122.47,206.30 122.72,206.30 122.97,206.30 123.22,206.30 123.47,206.30 123.72,206.30 123.97,206.30 124.22,206.30 124.47,206.30 124.72,206.30 124.97,206.30 125.22,206.30 125.47,206.30 125.72,206.30 125.97,206.30 126.22,206.30 126.47,206.30 126.72,206.30 126.97,206.30 127.22,206.30 127.47,206.30 127.72,206.30 127.97,206.30 128.22,206.30 128.47,206.30 128.72,206.30 128.97,206.30 129.22,206.30 129.47,206.30 129.72,206.30 129.97,206.30 130.22,206.30 130.47,206.30 130.72,206.30 130.97,206.30 131.22,206.30 131.47,206.30 131.72,206.30 131.97,206.30 132.22,206.30 132.47,206.30 132.72,206.30 132.97,206.30 133.22,206.30 133.47,206.30 133.72,206.30 133.97,206.30 134.22,206.30 134.47,206.28 134.72,206.21 134.97,206.13 135.22,206.04 135.47,205.93 135.72,205.80 135.97,205.64 136.22,205.44 136.47,205.20 136.72,204.91 136.97,204.53 137.22,204.06 137.47,203.46 137.72,202.69 137.97,201.71 138.22,200.53 138.47,199.21 138.72,197.95 138.97,197.11 139.22,197.02 139.47,197.73 139.72,198.94 139.97,200.28 140.22,201.49 140.47,202.51 140.72,203.32 140.97,203.95 141.22,204.45 141.47,204.84 141.72,205.15 141.97,205.40 142.22,205.60 142.47,205.77 142.72,205.90 142.97,206.02 143.22,206.11 143.47,206.19 143.72,206.26 143.97,206.30 144.22,206.30 144.47,206.30 144.72,206.30 144.97,206.30 145.22,206.30 145.47,206.30 145.72,206.30 145.97,206.24 146.22,206.08 146.47,205.88 146.72,205.66 146.97,205.39 147.22,205.07 147.47,204.68 147.72,204.21 147.97,203.62 148.22,202.90 148.47,201.99 148.72,200.83 148.97,199.35 149.22,197.46 149.47,195.09 149.72,192.20 149.97,188.97 150.22,185.88 150.47,183.83 150.72,183.62 150.97,185.36 151.22,188.31 151.47,191.57 151.72,194.55 151.97,197.03 152.22,199.01 152.47,200.56 152.72,201.78 152.97,202.73 153.22,203.49 153.47,204.10 153.72,204.59 153.97,204.99 154.22,205.20 154.47,205.32 154.72,205.38 154.97,205.37 155.22,205.29 155.47,205.07 155.72,204.71 155.97,204.26 156.22,203.70 156.47,203.00 156.72,202.12 156.97,200.99 157.22,199.55 157.47,197.72 157.72,195.46 157.97,192.83 158.22,190.11 158.47,187.94 158.72,187.09 158.97,187.94 159.22,190.11 159.47,192.83 159.72,195.46 159.97,197.72 160.22,199.55 160.47,200.99 160.72,202.12 160.97,203.00 161.22,203.70 161.47,204.26 161.72,204.71 161.97,205.07 162.22,205.38 162.47,205.63 162.72,205.84 162.97,206.02 163.22,206.17 163.47,206.30 163.72,206.30 163.97,206.30 164.22,206.30 164.47,206.30 164.72,206.30 164.97,206.30 165.22,206.30 165.47,206.30 165.72,206.30 165.97,206.30 166.22,206.30 166.47,206.30 166.72,206.30 166.97,206.30 167.22,206.30 167.47,206.30 167.72,206.30 167.97,206.30 168.22,206.05 168.47,205.75 168.72,205.40 168.97,204.99 169.22,204.50 169.47,203.91 169.72,203.20 169.97,202.32 170.22,201.24 170.47,199.88 170.72,198.16 170.97,195.97 171.22,193.17 171.47,189.61 171.72,185.21 171.97,180.09 172.22,174.80 172.47,170.57 172.72,168.91 172.97,170.57 173.22,174.80 173.47,180.09 173.72,185.21 173.97,189.61 174.22,193.17 174.47,195.97 174.72,198.16 174.97,199.88 175.22,201.24 175.47,202.32 175.72,203.20 175.97,203.91 176.22,204.50 176.47,204.99 176.72,205.40 176.97,205.75 177.22,206.05 177.47,206.30 177.72,206.30 177.97,206.30 178.22,206.30 178.47,206.30 178.72,206.30 178.97,206.30 179.22,206.30 179.47,206.30 179.72,206.30 179.97,206.30 180.22,206.30 180.47,206.30 180.72,206.30 180.97,206.30 181.22,206.27 181.47,206.08 181.72,205.86 181.97,205.60 182.22,205.29 182.47,204.92 182.72,204.48 182.97,203.95 183.22,203.29 183.47,202.47 183.72,201.44 183.97,200.13 184.22,198.47 184.47,196.35 184.72,193.66 184.97,190.37 185.22,186.59 185.47,182.84 185.72,180.03 185.97,179.23 186.22,180.78 186.47,183.97 186.72,187.70 186.97,191.16 187.22,194.03 187.47,196.26 187.72,197.91 187.97,199.07 188.22,199.82 188.47,200.21 188.72,200.25 188.97,199.96 189.22,199.33 189.47,198.38 189.72,197.24 189.97,196.19 190.22,195.64 190.47,195.94 190.72,197.02 190.97,198.42 191.22,199.89 191.47,201.20 191.72,202.28 191.97,203.14 192.22,203.81 192.47,204.34 192.72,204.75 192.97,205.08 193.22,205.35 193.47,205.56 193.72,205.74 193.97,205.89" fill="none" stroke="#3ca2f0" stroke-width="0.88" stroke-linejoin="round"/>
<polyline points="79.80,201.30 80.05,201.30 80.30,201.30 80.55,201.30 80.80,201.30 81.05,201.30 81.30,201.30 81.55,201.30 81.80,201.30 82.05,201.30 82.30,201.30 82.55,201.30 82.80,201.30 83.05,201.30 83.30,201.30 83.55,201.30 83.80,201.30 84.05,201.30 84.30,201.30 84.55,201.30 84.80,201.30 85.05,201.30 85.30,201.30 85.55,201.30 85.80,201.30 86.05,201.30 86.30,201.14 86.55,200.43 86.80,199.53 87.05,198.36 87.30,196.83 87.55,194.76 87.80,191.92 88.05,187.91 88.30,182.14 88.55,173.85 88.80,162.44 89.05,149.08 89.30,139.35 89.55,140.60 89.80,151.72 90.05,164.96 90.30,175.75 90.55,183.47 90.80,188.83 91.05,192.57 91.30,195.23 91.55,197.17 91.80,198.62 92.05,199.72 92.30,200.58 92.55,201.26 92.80,201.30 93.05,201.30 93.30,201.30 93.55,201.30 93.80,201.30 94.05,201.30 94.30,201.30 94.55,201.30 94.80,201.30 95.05,201.30 95.30,201.30 95.55,201.30 95.80,201.30 96.05,201.30 96.30,201.30 96.55,201.30 96.80,201.30 97.05,201.30 97.30,201.30 97.55,201.30 97.80,201.30 98.05,201.30 98.30,201.30 98.55,201.30 98.80,201.30 99.05,201.30 99.30,201.30 99.55,201.30 99.80,201.30 100.05,201.30 100.30,201.30 100.55,201.30 100.80,201.30 101.05,201.30 101.30,201.30 101.55,201.30 101.80,201.30 102.05,201.30 102.30,201.30 102.55,201.30 102.80,201.30 103.05,201.30 103.30,201.30 103.55,201.30 103.80,201.30 104.05,201.30 104.30,201.30 104.55,201.30 104.80,201.30 105.05,201.30 105.30,201.30 105.55,201.30 105.80,201.30 106.05,201.30 106.30,201.30 106.55,201.30 106.80,201.30 107.05,201.30 107.30,201.30 107.55,201.30 107.80,201.30 108.05,201.30 108.30,201.30 108.55,201.30 108.80,201.30 109.05,201.30 109.30,201.30 109.55,201.30 109.80,201.30 110.05,201.30 110.30,201.30 110.55,201.30 110.80,201.30 111.05,201.30 111.30,201.30 111.55,201.30 111.80,201.30 112.05,201.30 112.30,201.30 112.55,201.30 112.80,201.30 113.05,201.30 113.30,201.30 113.55,201.30 113.80,201.30 114.05,201.30 114.30,201.30 114.55,201.30 114.80,201.30 115.05,201.30 115.30,201.30 115.55,201.30 115.80,201.30 116.05,201.30 116.30,201.30 116.55,201.30 116.80,201.30 117.05,201.30 117.30,201.30 117.55,201.30 117.80,201.30 118.05,201.30 118.30,201.30 118.55,201.30 118.80,201.30 119.05,201.30 119.30,201.30 119.55,201.30 119.80,201.30 120.05,201.30 120.30,201.30 120.55,201.30 120.80,201.30 121.05,201.30 121.30,201.30 121.55,201.30 121.80,201.30 122.05,201.30 122.30,201.30 122.55,201.30 122.80,201.30 123.05,201.30 123.30,201.30 123.55,201.30 123.80,201.30 124.05,201.30 124.30,201.30 124.55,201.30 124.80,201.30 125.05,201.30 125.30,201.30 125.55,201.30 125.80,201.30 126.05,201.30 126.30,201.30 126.55,201.30 126.80,201.30 127.05,201.30 127.30,201.30 127.55,201.30 127.80,201.30 128.05,201.30 128.30,201.30 128.55,201.30 128.80,201.30 129.05,201.30 129.30,201.30 129.55,201.30 129.80,201.30 130.05,201.30 130.30,201.30 130.55,201.30 130.80,201.30 131.05,201.30 131.30,201.30 131.55,201.30 131.80,201.30 132.05,201.30 132.30,201.30 132.55,201.30 132.80,201.30 133.05,201.30 133.30,201.30 133.55,201.30 133.80,201.30 134.05,201.30 134.30,201.30 134.55,201.30 134.80,201.30 135.05,201.30 135.30,201.30 135.55,201.30 135.80,201.30 136.05,201.30 136.30,201.30 136.55,201.30 136.80,201.30 137.05,201.30 137.30,201.30 137.55,201.27 137.80,201.19 138.05,201.09 138.30,200.98 138.55,200.85 138.80,200.69 139.05,200.50 139.30,200.26 139.55,199.97 139.80,199.61 140.05,199.16 140.30,198.58 140.55,197.85 140.80,196.92 141.05,195.74 141.30,194.31 141.55,192.70 141.80,191.17 142.05,190.15 142.30,190.05 142.55,190.91 142.80,192.38 143.05,193.99 143.30,195.47 143.55,196.70 143.80,197.68 144.05,198.45 144.30,199.05 144.55,199.53 144.80,199.91 145.05,200.21 145.30,200.45 145.55,200.65 145.80,200.82 146.05,200.96 146.30,201.07 146.55,201.17 146.80,201.26 147.05,201.30 147.30,201.30 147.55,201.30 147.80,201.30 148.05,201.30 148.30,201.30 148.55,201.30 148.80,201.30 149.05,201.23 149.30,201.03 149.55,200.79 149.80,200.52 150.05,200.19 150.30,199.80 150.55,199.33 150.80,198.76 151.05,198.05 151.30,197.17 151.55,196.07 151.80,194.66 152.05,192.87 152.30,190.58 152.55,187.70 152.80,184.20 153.05,180.28 153.30,176.54 153.55,174.04 153.80,173.79 154.05,175.90 154.30,179.48 154.55,183.44 154.80,187.05 155.05,190.06 155.30,192.46 155.55,194.34 155.80,195.81 156.05,196.97 156.30,197.89 156.55,198.63 156.80,199.23 157.05,199.72 157.30,199.96 157.55,200.12 157.80,200.18 158.05,200.17 158.30,200.07 158.55,199.81 158.80,199.37 159.05,198.82 159.30,198.15 159.55,197.30 159.80,196.23 160.05,194.86 160.30,193.11 160.55,190.90 160.80,188.16 161.05,184.96 161.30,181.66 161.55,179.03 161.80,178.00 162.05,179.03 162.30,181.66 162.55,184.96 162.80,188.16 163.05,190.90 163.30,193.11 163.55,194.86 163.80,196.23 164.05,197.30 164.30,198.15 164.55,198.82 164.80,199.37 165.05,199.81 165.30,200.18 165.55,200.48 165.80,200.74 166.05,200.96 166.30,201.14 166.55,201.30 166.80,201.30 167.05,201.30 167.30,201.30 167.55,201.30 167.80,201.30 168.05,201.30 168.30,201.30 168.55,201.30 168.80,201.30 169.05,201.30 169.30,201.30 169.55,201.30 169.80,201.30 170.05,201.30 170.30,201.30 170.55,201.30 170.80,201.30 171.05,201.30 171.30,200.99 171.55,200.63 171.80,200.21 172.05,199.71 172.30,199.12 172.55,198.41 172.80,197.54 173.05,196.48 173.30,195.16 173.55,193.51 173.80,191.42 174.05,188.77 174.30,185.37 174.55,181.06 174.80,175.72 175.05,169.50 175.30,163.09 175.55,157.96 175.80,155.95 176.05,157.96 176.30,163.09 176.55,169.50 176.80,175.72 177.05,181.06 177.30,185.37 177.55,188.77 177.80,191.42 178.05,193.51 178.30,195.16 178.55,196.48 178.80,197.54 179.05,198.41 179.30,199.12 179.55,199.71 179.80,200.21 180.05,200.63 180.30,200.99 180.55,201.30 180.80,201.30 181.05,201.30 181.30,201.30 181.55,201.30 181.80,201.30 182.05,201.30 182.30,201.30 182.55,201.30 182.80,201.30 183.05,201.30 183.30,201.30 183.55,201.30 183.80,201.30 184.05,201.30 184.30,201.26 184.55,201.03 184.80,200.76 185.05,200.45 185.30,200.07 185.55,199.63 185.80,199.10 186.05,198.44 186.30,197.64 186.55,196.65 186.80,195.40 187.05,193.82 187.30,191.80 187.55,189.23 187.80,185.97 188.05,181.97 188.30,177.40 188.55,172.85 188.80,169.44 189.05,168.47 189.30,170.35 189.55,174.22 189.80,178.73 190.05,182.94 190.30,186.42 190.55,189.12 190.80,191.12 191.05,192.53 191.30,193.44 191.55,193.91 191.80,193.96 192.05,193.61 192.30,192.84 192.55,191.70 192.80,190.32 193.05,189.03 193.30,188.37 193.55,188.73 193.80,190.04 194.05,191.74 194.30,193.53 194.55,195.12 194.80,196.43 195.05,197.47 195.30,198.28 195.55,198.92 195.80,199.42 196.05,199.82 196.30,200.15 196.55,200.41 196.80,200.62 197.05,200.80" fill="none" stroke="#405cf0" stroke-width="0.88" stroke-linejoin="round"/>
<polyline points="82.88,196.30 83.13,196.30 83.38,196.30 83.63,196.30 83.88,196.30 84.13,196.30 84.38,196.30 84.63,196.30 84.88,196.30 85.13,196.30 85.38,196.30 85.63,196.30 85.88,196.30 86.13,196.30 86.38,196.30 86.63,196.30 86.88,196.30 87.13,196.30 87.38,196.30 87.63,196.30 87.88,196.30 88.13,196.30 88.38,196.30 88.63,196.30 88.88,196.30 89.13,196.30 89.38,196.13 89.63,195.37 89.88,194.41 90.13,193.17 90.38,191.54 90.63,189.35 90.88,186.32 91.13,182.05 91.38,175.92 91.63,167.10 91.88,154.96 92.13,140.75 92.38,130.40 92.63,131.72 92.88,143.56 93.13,157.64 93.38,169.12 93.63,177.33 93.88,183.03 94.13,187.01 94.38,189.84 94.63,191.91 94.88,193.45 95.13,194.62 95.38,195.54 95.63,196.26 95.88,196.30 96.13,196.30 96.38,196.30 96.63,196.30 96.88,196.30 97.13,196.30 97.38,196.30 97.63,196.30 97.88,196.30 98.13,196.30 98.38,196.30 98.63,196.30 98.88,196.30 99.13,196.30 99.38,196.30 99.63,196.30 99.88,196.30 100.13,196.30 100.38,196.30 100.63,196.30 100.88,196.30 101.13,196.30 101.38,196.30 101.63,196.30 101.88,196.30 102.13,196.30 102.38,196.30 102.63,196.30 102.88,196.30 103.13,196.30 103.38,196.30 103.63,196.30 103.88,196.30 104.13,196.30 104.38,196.30 104.63,196.30 104.88,196.30 105.13,196.30 105.38,196.30 105.63,196.30 105.88,196.30 106.13,196.30 106.38,196.30 106.63,196.30 106.88,196.30 107.13,196.30 107.38,196.30 107.63,196.30 107.88,196.30 108.13,196.30 108.38,196.30 108.63,196.30 108.88,196.30 109.13,196.30 109.38,196.30 109.63,196.30 109.88,196.30 110.13,196.30 110.38,196.30 110.63,196.30 110.88,196.30 111.13,196.30 111.38,196.30 111.63,196.30 111.88,196.30 112.13,196.30 112.38,196.30 112.63,196.30 112.88,196.30 113.13,196.30 113.38,196.30 113.63,196.30 113.88,196.30 114.13,196.30 114.38,196.30 114.63,196.30 114.88,196.30 115.13,196.30 115.38,196.30 115.63,196.30 115.88,196.30 116.13,196.30 116.38,196.30 116.63,196.30 116.88,196.30 117.13,196.30 117.38,196.30 117.63,196.30 117.88,196.30 118.13,196.30 118.38,196.30 118.63,196.30 118.88,196.30 119.13,196.30 119.38,196.30 119.63,196.30 119.88,196.30 120.13,196.30 120.38,196.30 120.63,196.30 120.88,196.30 121.13,196.30 121.38,196.30 121.63,196.30 121.88,196.30 122.13,196.30 122.38,196.30 122.63,196.30 122.88,196.30 123.13,196.30 123.38,196.30 123.63,196.30 123.88,196.30 124.13,196.30 124.38,196.30 124.63,196.30 124.88,196.30 125.13,196.30 125.38,196.30 125.63,196.30 125.88,196.30 126.13,196.30 126.38,196.30 126.63,196.30 126.88,196.30 127.13,196.30 127.38,196.30 127.63,196.30 127.88,196.30 128.13,196.30 128.38,196.30 128.63,196.30 128.88,196.30 129.13,196.30 129.38,196.30 129.63,196.30 129.88,196.30 130.13,196.30 130.38,196.30 130.63,196.30 130.88,196.30 131.13,196.30 131.38,196.30 131.63,196.30 131.88,196.30 132.13,196.30 132.38,196.30 132.63,196.30 132.88,196.30 133.13,196.30 133.38,196.30 133.63,196.30 133.88,196.30 134.13,196.30 134.38,196.30 134.63,196.30 134.88,196.30 135.13,196.30 135.38,196.30 135.63,196.30 135.88,196.30 136.13,196.30 136.38,196.30 136.63,196.30 136.88,196.30 137.13,196.30 137.38,196.30 137.63,196.30 137.88,196.30 138.13,196.30 138.38,196.30 138.63,196.30 138.88,196.30 139.13,196.30 139.38,196.30 139.63,196.30 139.88,196.30 140.13,196.30 140.38,196.30 140.63,196.27 140.88,196.18 141.13,196.08 141.38,195.96 141.63,195.82 141.88,195.65 142.13,195.44 142.38,195.19 142.63,194.89 142.88,194.50 143.13,194.02 143.38,193.41 143.63,192.63 143.88,191.64 144.13,190.38 144.38,188.86 144.63,187.15 144.88,185.52 145.13,184.44 145.38,184.33 145.63,185.25 145.88,186.81 146.13,188.53 146.38,190.10 146.63,191.41 146.88,192.45 147.13,193.27 147.38,193.91 147.63,194.42 147.88,194.82 148.13,195.14 148.38,195.40 148.63,195.61 148.88,195.79 149.13,195.93 149.38,196.06 149.63,196.16 149.88,196.25 150.13,196.30 150.38,196.30 150.63,196.30 150.88,196.30 151.13,196.30 151.38,196.30 151.63,196.30 151.88,196.30 152.13,196.22 152.38,196.01 152.63,195.76 152.88,195.47 153.13,195.12 153.38,194.71 153.63,194.21 153.88,193.60 154.13,192.85 154.38,191.91 154.63,190.73 154.88,189.24 155.13,187.33 155.38,184.90 155.63,181.83 155.88,178.11 156.13,173.93 156.38,169.96 156.63,167.30 156.88,167.04 157.13,169.28 157.38,173.09 157.63,177.30 157.88,181.14 158.13,184.34 158.38,186.89 158.63,188.89 158.88,190.46 159.13,191.70 159.38,192.67 159.63,193.46 159.88,194.09 160.13,194.62 160.38,194.88 160.63,195.04 160.88,195.11 161.13,195.10 161.38,194.99 161.63,194.72 161.88,194.24 162.13,193.66 162.38,192.94 162.63,192.04 162.88,190.90 163.13,189.45 163.38,187.59 163.63,185.23 163.88,182.32 164.13,178.92 164.38,175.41 164.63,172.61 164.88,171.51 165.13,172.61 165.38,175.41 165.63,178.92 165.88,182.32 166.13,185.23 166.38,187.59 166.63,189.45 166.88,190.90 167.13,192.04 167.38,192.94 167.63,193.66 167.88,194.24 168.13,194.72 168.38,195.11 168.63,195.43 168.88,195.70 169.13,195.94 169.38,196.13 169.63,196.30 169.88,196.30 170.13,196.30 170.38,196.30 170.63,196.30 170.88,196.30 171.13,196.30 171.38,196.30 171.63,196.30 171.88,196.30 172.13,196.30 172.38,196.30 172.63,196.30 172.88,196.30 173.13,196.30 173.38,196.30 173.63,196.30 173.88,196.30 174.13,196.30 174.38,195.97 174.63,195.59 174.88,195.14 175.13,194.61 175.38,193.98 175.63,193.22 175.88,192.30 176.13,191.17 176.38,189.77 176.63,188.01 176.88,185.79 177.13,182.97 177.38,179.35 177.63,174.77 177.88,169.09 178.13,162.48 178.38,155.65 178.63,150.19 178.88,148.06 179.13,150.19 179.38,155.65 179.63,162.48 179.88,169.09 180.13,174.77 180.38,179.35 180.63,182.97 180.88,185.79 181.13,188.01 181.38,189.77 181.63,191.17 181.88,192.30 182.13,193.22 182.38,193.98 182.63,194.61 182.88,195.14 183.13,195.59 183.38,195.97 183.63,196.30 183.88,196.30 184.13,196.30 184.38,196.30 184.63,196.30 184.88,196.30 185.13,196.30 185.38,196.30 185.63,196.30 185.88,196.30 186.13,196.30 186.38,196.30 186.63,196.30 186.88,196.30 187.13,196.30 187.38,196.26 187.63,196.01 187.88,195.73 188.13,195.39 188.38,195.00 188.63,194.52 188.88,193.95 189.13,193.26 189.38,192.41 189.63,191.35 189.88,190.03 190.13,188.34 190.38,186.20 190.63,183.46 190.88,179.99 191.13,175.74 191.38,170.87 191.63,166.03 191.88,162.41 192.13,161.37 192.38,163.37 192.63,167.49 192.88,172.29 193.13,176.77 193.38,180.47 193.63,183.34 193.88,185.47 194.13,186.97 194.38,187.94 194.63,188.44 194.88,188.50 195.13,188.12 195.38,187.30 195.63,186.09 195.88,184.61 196.13,183.25 196.38,182.54 196.63,182.93 196.88,184.33 197.13,186.13 197.38,188.03 197.63,189.72 197.88,191.12 198.13,192.22 198.38,193.09 198.63,193.77 198.88,194.30 199.13,194.73 199.38,195.07 199.63,195.35 199.88,195.58 200.13,195.76" fill="none" stroke="#3434e6" stroke-width="0.88" stroke-linejoin="round"/>
<path d="M48.4 252.4 L84 195.2" stroke="#000" stroke-width="1.1"/>
<g fill="#000"><path d="M45.4 257.2 L46.8 250.4 L50.9 253.0 Z"/><path d="M86.4 191.0 L85.1 197.3 L81.4 194.9 Z"/></g>
<g fill="#000" font-family="Liberation Serif, DejaVu Serif, serif">
<text x="55.6" y="144" font-size="17.5" font-weight="bold">I</text>
<text x="78.6" y="191.8" font-size="15">t</text>
<text x="191.2" y="228.8" font-size="18">Ω</text>
</g>
</svg></div>
<div id="img2" class="abs" style="left:0;top:350px;width:240px;height:170px;"><svg width="240" height="170" viewBox="0 350 240 170" style="position:absolute;left:0;top:0;">
<path d="M52.4 386.9 V506" stroke="#a4a6a8" stroke-width="1.3"/>
<path d="M18 469.1 L85.4 429.2 M18 429.2 L85.4 469.1" stroke="#5e6062" stroke-width=".9"/>
<path d="M33.4 421.4 A19.7 6.4 0 1 1 35.4 427" fill="none" stroke="#9aa6ac" stroke-width=".7"/>
<path d="M33.2 473.8 A19.7 6.4 0 1 1 35 479.4" fill="none" stroke="#9aa6ac" stroke-width=".7"/>
<path d="M28.2 425.6 L37 423.8 L35.2 426.2 Z" fill="#a8d8e8" stroke="#8fb0c0" stroke-width=".4"/>
<path d="M27.4 478.2 L36.6 476.6 L34.6 478.8 Z" fill="#a8d8e8" stroke="#8fb0c0" stroke-width=".4"/>
<path d="M51.8 449.1 L44.9 416.9" stroke="#2e2e9c" stroke-width=".8"/>
<path d="M44.9 416.9 L47.9 421.4 L44.0 422.2 Z" fill="#2e2e9c"/>
<path d="M51.8 449.1 L54.9 415.5" stroke="#2e2e9c" stroke-width=".8"/>
<path d="M54.9 415.5 L56.4 420.7 L52.4 420.3 Z" fill="#2e2e9c"/>
<path d="M51.8 449.1 L62.6 417.2" stroke="#2e2e9c" stroke-width=".8"/>
<path d="M62.6 417.2 L62.9 422.6 L59.1 421.3 Z" fill="#2e2e9c"/>
<path d="M51.8 449.1 L70.3 421.1" stroke="#2e2e9c" stroke-width=".8"/>
<path d="M70.3 421.1 L69.2 426.4 L65.9 424.2 Z" fill="#2e2e9c"/>
<path d="M51.8 449.1 L46.6 430.6" stroke="#2e2e9c" stroke-width=".8"/>
<path d="M46.6 430.6 L49.9 434.9 L46.0 436.0 Z" fill="#2e2e9c"/>
<path d="M51.8 449.1 L52.3 431.4" stroke="#2e2e9c" stroke-width=".8"/>
<path d="M52.3 431.4 L54.2 436.5 L50.2 436.3 Z" fill="#2e2e9c"/>
<path d="M51.8 449.1 L59.1 430.2" stroke="#2e2e9c" stroke-width=".8"/>
<path d="M59.1 430.2 L59.2 435.6 L55.4 434.1 Z" fill="#2e2e9c"/>
<path d="M51.8 449.1 L51.8 469.6" stroke="#2e2e9c" stroke-width=".8"/>
<path d="M51.8 469.6 L49.8 464.6 L53.8 464.6 Z" fill="#2e2e9c"/>
<path d="M51.8 449.1 L70.6 472.1" stroke="#2e2e9c" stroke-width=".8"/>
<path d="M70.6 472.1 L65.9 469.5 L69.0 467.0 Z" fill="#2e2e9c"/>
<path d="M51.8 449.1 L68.6 478.6" stroke="#2e2e9c" stroke-width=".8"/>
<path d="M68.6 478.6 L64.4 475.2 L67.9 473.3 Z" fill="#2e2e9c"/>
<path d="M76.3 459.7 V435.5" stroke="#9acd00" stroke-width="2.6"/>
<path d="M76.3 429.4 L79.5 436.4 L73.1 436.4 Z" fill="#9acd00"/>
<g font-family="DejaVu Sans, Liberation Sans, sans-serif" font-size="13" fill="#000">
<text x="48.9" y="380">z</text><text x="89.6" y="428">y</text><text x="89.6" y="474.3">x</text>
<text x="147.1" y="379">z</text><text x="187.8" y="426.8">y</text><text x="187.8" y="473.1">x</text>
</g>
<path d="M150.5 385.7 V505.2" stroke="#a4a6a8" stroke-width="1.3"/>
<path d="M116.6 468.3 L183.8 428.5 M116.6 428.5 L183.8 468.3" stroke="#5e6062" stroke-width=".9"/>
<path d="M146.1 448.8 V433.1 H139.7 L150.5 424.9 L161.2 433.1 H155 V448.8 Z" fill="#ff0a0a"/>
<path d="M150.5 426 V448.6" stroke="#d40000" stroke-width=".8"/>
<path d="M169.7 446.9 V422.5" stroke="#9acd00" stroke-width="2.6"/>
<path d="M169.7 416.3 L172.9 423.3 L166.5 423.3 Z" fill="#9acd00"/>
</svg></div>
<div class="t" style="left:250.3px;top:133px;font-size:20.6px;line-height:28px;height:28px;letter-spacing:0.452px;">Setup for R1 relaxation analysis</div>
<div class="field ro" style="left:496px;top:165px;width:788px;"></div>
<div class="field" style="left:496px;top:190px;width:788px;"></div>
<div class="field" style="left:496px;top:215px;width:788px;"></div>
<div class="field ro" style="left:496px;top:240px;width:788px;"></div>
<div class="btn" style="left:1289px;top:215px;width:99px;height:24px;"></div>
<div class="btn" style="left:1289px;top:240px;width:99px;height:24px;"></div>
<div class="abs" style="left:251px;top:295px;width:1137px;height:363px;box-sizing:border-box;border:1px solid #c4d0d8;border-radius:3px;box-shadow:inset 1px 1px 0 #fafbfd, 1px 1px 0 #fafbfd;"></div>
<div class="t" style="left:253.6px;top:285px;font-weight:bold;font-size:15px;line-height:20px;height:20px;background:#eff3f7;padding:0 2px;letter-spacing:0.345px;">Spectra list</div>
<div class="btn" style="left:261px;top:309px;width:119px;height:39px;"></div>
<div class="btn" style="left:386px;top:309px;width:119px;height:39px;"></div>
<div id="list" class="abs" style="left:261px;top:354px;width:1118px;height:294px;box-sizing:border-box;border:1px solid #bdcad1;border-radius:2px;background:#fff;"></div>
<div class="abs" style="left:262px;top:355px;width:1116px;height:25px;background:linear-gradient(#f0f3f6,#e2e8ec 45%,#d3dce1 80%,#ccd7dc);border-bottom:1px solid #a3b4c0;"></div>
<div class="field" style="left:496px;top:669px;width:776px;border-radius:2px 0 0 2px;"></div>
<div class="sbtn" style="top:669px;border-radius:0 3px 0 0;"><i class="u"></i></div>
<div class="sbtn" style="top:681px;border-radius:0 0 3px 0;"><i class="d"></i></div>
<div class="field" style="left:496px;top:694px;width:776px;border-radius:2px 0 0 2px;"></div>
<div class="sbtn" style="top:694px;border-radius:0 3px 0 0;"><i class="u"></i></div>
<div class="sbtn" style="top:706px;border-radius:0 0 3px 0;"><i class="d"></i></div>
<div class="abs" style="left:548px;top:686px;width:337px;height:58px;box-sizing:border-box;border:1px solid #dcd75e;border-radius:4px;background:#f8f69b;box-shadow:0 1px 4px rgba(0,0,0,.3);"></div>
<div class="btn" style="left:1213px;top:922px;width:175px;height:43px;"></div>
<div class="abs" style="left:1217px;top:926px;width:168px;height:36px;box-sizing:border-box;border:1px dotted #2a1c1c;"></div>
<div class="sb" style="left:2px;width:798px;"></div>
<div class="sb" style="left:802px;width:198px;"></div>
<div class="sb" style="left:1002px;width:397px;"></div>
<div class="hl" style="top:1002px;height:2px;background:#d6dade;"></div>
<div class="t" style="left:9.0px;top:27px;letter-spacing:-0.2px;">File</div>
<div class="t" style="left:43.7px;top:27px;letter-spacing:-0.2px;">View</div>
<div class="t" style="left:86.1px;top:27px;letter-spacing:0.026px;">User functions (a-m)</div>
<div class="t" style="left:231.9px;top:27px;letter-spacing:0.037px;">User functions (n-z)</div>
<div class="t" style="left:372.5px;top:27px;letter-spacing:0.0px;">Tools</div>
<div class="t" style="left:417.0px;top:27px;letter-spacing:0.167px;">Help</div>
<div class="t" style="left:7.6px;top:91px;letter-spacing:-0.3px;">R1 600</div>
<div class="t" style="left:251.3px;top:170px;letter-spacing:-0.195px;">The data pipe bundle:</div>
<div class="t" style="left:499.6px;top:170px;letter-spacing:-0.2px;">r1 (Tue Sep  4 15:47:36 2012)</div>
<div class="t" style="left:250.3px;top:195px;letter-spacing:-0.15px;">NMR frequency label [MHz]</div>
<div class="t" style="left:499.6px;top:195px;letter-spacing:-0.25px;">600</div>
<div class="t" style="left:250.3px;top:220px;letter-spacing:-0.213px;">Results directory</div>
<div class="t" style="left:500.0px;top:220px;letter-spacing:-0.194px;">/data/relaxation/Mg.T1.600.2004-11-02/data-analysis</div>
<div class="t" style="left:250.3px;top:245px;letter-spacing:0.009px;">Spin systems</div>
<div class="t" style="left:499.4px;top:245px;letter-spacing:-0.107px;">151 spins loaded and selected</div>
<div class="t" style="left:1325.6px;top:220px;letter-spacing:-0.08px;">Change</div>
<div class="t" style="left:1315.4px;top:245px;letter-spacing:-0.12px;">Spin editor</div>
<div class="t" style="left:323.3px;top:321px;letter-spacing:0.0px;">Add</div>
<div class="t" style="left:439.3px;top:321px;letter-spacing:-0.02px;">Delete</div>
<div class="t" style="left:269.0px;top:361px;letter-spacing:-0.041px;">Spectrum ID string</div>
<div class="t" style="left:641.0px;top:361px;letter-spacing:-0.06px;">Delay times</div>
<div class="t" style="left:1013.0px;top:361px;letter-spacing:-0.258px;">Replicate IDs</div>
<div class="t" style="left:264.7px;top:384px;letter-spacing:-0.25px;">ncyc2</div>
<div class="t" style="left:636.7px;top:384px;letter-spacing:-0.25px;">0.010834</div>
<div class="t" style="left:1008.7px;top:384px;letter-spacing:-0.25px;">ncyc2b</div>
<div class="t" style="left:264.7px;top:405px;letter-spacing:-0.25px;">ncyc2b</div>
<div class="t" style="left:636.7px;top:405px;letter-spacing:-0.25px;">0.010834</div>
<div class="t" style="left:1008.7px;top:405px;letter-spacing:-0.25px;">ncyc2</div>
<div class="t" style="left:264.7px;top:426px;letter-spacing:-0.25px;">ncyc10</div>
<div class="t" style="left:636.7px;top:426px;letter-spacing:-0.25px;">0.05417</div>
<div class="t" style="left:264.7px;top:447px;letter-spacing:-0.25px;">ncyc18</div>
<div class="t" style="left:636.7px;top:447px;letter-spacing:-0.25px;">0.0975</div>
<div class="t" style="left:1008.7px;top:447px;letter-spacing:-0.25px;">ncyc18b</div>
<div class="t" style="left:264.7px;top:468px;letter-spacing:-0.25px;">ncyc18b</div>
<div class="t" style="left:636.7px;top:468px;letter-spacing:-0.25px;">0.0975</div>
<div class="t" style="left:1008.7px;top:468px;letter-spacing:-0.25px;">ncyc18</div>
<div class="t" style="left:264.7px;top:489px;letter-spacing:-0.25px;">ncyc46</div>
<div class="t" style="left:636.7px;top:489px;letter-spacing:-0.25px;">0.24918</div>
<div class="t" style="left:264.7px;top:510px;letter-spacing:-0.25px;">ncyc90</div>
<div class="t" style="left:636.7px;top:510px;letter-spacing:-0.25px;">0.48753</div>
<div class="t" style="left:1008.7px;top:510px;letter-spacing:-0.25px;">ncyc90b</div>
<div class="t" style="left:264.7px;top:531px;letter-spacing:-0.25px;">ncyc90b</div>
<div class="t" style="left:636.7px;top:531px;letter-spacing:-0.25px;">0.48753</div>
<div class="t" style="left:1008.7px;top:531px;letter-spacing:-0.25px;">ncyc90</div>
<div class="t" style="left:264.7px;top:552px;letter-spacing:-0.25px;">ncyc182</div>
<div class="t" style="left:636.7px;top:552px;letter-spacing:-0.25px;">0.985894</div>
<div class="t" style="left:1008.7px;top:552px;letter-spacing:-0.25px;">ncyc182b</div>
<div class="t" style="left:264.7px;top:573px;letter-spacing:-0.25px;">ncyc182b</div>
<div class="t" style="left:636.7px;top:573px;letter-spacing:-0.25px;">0.985894</div>
<div class="t" style="left:1008.7px;top:573px;letter-spacing:-0.25px;">ncyc182</div>
<div class="t" style="left:264.7px;top:594px;letter-spacing:-0.25px;">ncyc272</div>
<div class="t" style="left:636.7px;top:594px;letter-spacing:-0.25px;">1.473424</div>
<div class="t" style="left:250.3px;top:674px;letter-spacing:-0.018px;">Grid search increments:</div>
<div class="t" style="left:500.2px;top:674px;letter-spacing:-0.3px;">21</div>
<div class="t" style="left:250.3px;top:699px;letter-spacing:-0.083px;">Monte Carlo simulation number:</div>
<div class="t" style="left:499.7px;top:699px;letter-spacing:-0.05px;">500</div>
<div class="t" style="left:556.2px;top:691px;letter-spacing:-0.175px;">This is the number of increments per dimension of</div>
<div class="t" style="left:556.2px;top:708px;letter-spacing:-0.153px;">the grid search performed prior to numerical</div>
<div class="t" style="left:555.2px;top:725px;letter-spacing:-0.058px;">optimisation.</div>
<div class="t" style="left:1296.1px;top:936px;letter-spacing:-0.067px;">Execute relax</div>
<div class="t" style="left:4.7px;top:983px;letter-spacing:-0.138px;">(C) 2001-2012 the relax development team</div>
<div class="t" style="left:804.7px;top:983px;letter-spacing:-0.047px;">Current data pipe:</div>
<div class="t" style="left:1004.8px;top:983px;letter-spacing:-0.197px;">origin - r1 (Tue Sep  4 15:47:36 2012)</div>
<svg width="1400" height="1004" viewBox="0 0 1400 1004" style="position:absolute;left:0;top:0;pointer-events:none;">
<defs>
<linearGradient id="bPlus" x1="0" y1="0" x2="0" y2="1"><stop offset="0" stop-color="#6aa6e6"/><stop offset=".4" stop-color="#3278cc"/><stop offset="1" stop-color="#1f55a4"/></linearGradient>
<linearGradient id="bMinus" x1="0" y1="0" x2="0" y2="1"><stop offset="0" stop-color="#f07070"/><stop offset=".4" stop-color="#d82020"/><stop offset="1" stop-color="#b81010"/></linearGradient>
<linearGradient id="bFoldB" x1="0" y1="0" x2="0" y2="1"><stop offset="0" stop-color="#7fb0ee"/><stop offset="1" stop-color="#9cc2f4"/></linearGradient>
<linearGradient id="bFoldF" x1="0" y1="0" x2="0" y2="1"><stop offset="0" stop-color="#b9d4f8"/><stop offset="1" stop-color="#78a9ec"/></linearGradient>
<radialGradient id="bSph" cx=".38" cy=".3" r=".85"><stop offset="0" stop-color="#10108e"/><stop offset=".55" stop-color="#06066c"/><stop offset=".85" stop-color="#2a3ac0"/><stop offset="1" stop-color="#7fa0e8"/></radialGradient>
<linearGradient id="wingL" x1="1" y1="0" x2="0.2" y2="1"><stop offset="0" stop-color="#093a56"/><stop offset=".45" stop-color="#0f6a8c"/><stop offset="1" stop-color="#1fa4c8"/></linearGradient>
<linearGradient id="wingR" x1="0" y1="0" x2="0.8" y2="1"><stop offset="0" stop-color="#093a56"/><stop offset=".45" stop-color="#0f6a8c"/><stop offset="1" stop-color="#1fa4c8"/></linearGradient>
<filter id="blur1" x="-20%" y="-20%" width="140%" height="140%"><feGaussianBlur stdDeviation="0.9" result="b"/><feTurbulence type="fractalNoise" baseFrequency="0.55" numOctaves="2" seed="3" result="n"/><feColorMatrix in="n" type="matrix" values="0 0 0 0 0  0 0 0 0 0  0 0 0 0 0  0 0 0 -2.2 1.75" result="a"/><feComposite in="b" in2="a" operator="in"/></filter>
<linearGradient id="curG" x1="0" y1="0" x2="1" y2="0"><stop offset="0" stop-color="#5565a8"/><stop offset=".6" stop-color="#1a1f4c"/><stop offset="1" stop-color="#10143a"/></linearGradient>
<g id="bfly">
 <path d="M0.09 21.62 L4.16 17.82 L10.67 14.02 L13.93 12.39 L14.47 9.67 L17.19 6.96 L19.90 5.06 L21.53 4.24 L21.26 0.99 L22.34 0.01 L23.97 0.44 L23.70 4.24 L29.67 4.24 L32.39 6.96 L32.93 13.47 L34.02 14.02 L34.56 22.16 L31.84 22.16 L27.50 23.79 L18.82 24.60 L7.96 24.60 L2.53 23.24 Z" fill="#0d0b0a"/>
 <path d="M34.29 6.41 L36.19 4.79 L42.16 3.43 L43.25 1.53 L42.16 0.17 L44.33 0.44 L45.42 4.24 L49.22 5.87 L53.02 10.22 L54.10 12.39 L58.45 14.56 L64.96 19.44 L69.30 22.70 L67.68 24.33 L59.53 25.14 L51.39 24.60 L43.25 23.24 L37.27 21.62 L35.10 22.16 L34.56 14.02 Z" fill="#0d0b0a"/>
 <g filter="url(#blur1)">
 <path d="M21.53 9.13 L31.84 7.77 L32.39 14.02 L31.84 17.82 L27.50 19.99 L22.62 22.70 L17.73 23.52 L14.47 21.07 L16.10 18.36 L19.90 14.56 L19.90 11.30 Z" fill="url(#wingL)"/>
 <path d="M35.10 8.04 L44.87 8.86 L48.13 12.39 L49.22 15.64 L55.19 21.07 L54.10 23.79 L49.22 22.70 L42.70 19.99 L36.73 17.82 L35.65 14.02 Z" fill="url(#wingR)"/>
 <path d="M14.47 20.80 L18.82 17.82 L25.33 16.73 L30.22 16.19 L29.67 18.36 L23.16 21.62 L17.73 23.24 Z" fill="#2cc6e0" opacity=".8"/>
 <path d="M38.36 17.27 L43.79 17.82 L49.22 18.90 L54.92 21.34 L54.10 23.52 L48.13 22.16 L41.62 19.99 Z" fill="#30d2e4" opacity=".8"/>
 </g>
 <path d="M33.04 13.47 L35.10 13.47 L35.32 22.16 L33.36 22.16 Z" fill="#4a3026"/>
 <path d="M34.02 22.70 L29.67 27.48 M35.65 22.70 L41.62 27.59" stroke="#6a4a3c" stroke-width=".4"/>
 <circle cx="29.56" cy="27.48" r=".5" fill="#2a2a2a"/>
</g>
</defs>
<!-- titlebar icon -->
<use href="#bfly" transform="translate(1.9 4.9) scale(0.217)"/>
<!-- window buttons -->
<rect x="1342.5" y="7.5" width="12" height="3.2" rx="1.6" fill="#e9e9ef" stroke="#8b8fa6" stroke-width=".5"/>
<path d="M1365.8 5 H1372.5 V10.3 H1370 M1365.8 5 V7" fill="none" stroke="#f2f2f5" stroke-width="1"/>
<rect x="1365.3" y="4" width="7.7" height="1.6" fill="#f2f2f5"/>
<rect x="1362.5" y="8.3" width="7" height="5.2" fill="none" stroke="#f2f2f5" stroke-width="1"/>
<rect x="1362" y="7.3" width="8" height="2" fill="#f2f2f5"/>
<path d="M1383.6 4.6 L1393.4 13.4 M1393.4 4.6 L1383.6 13.4" stroke="#e6e6ea" stroke-width="1.9"/>
<!-- Change: folder -->
<path d="M1304.6 222 Q1304.6 221.2 1305.4 221.2 H1310.4 L1311.4 222.6 H1318.6 Q1319.4 222.6 1319.4 223.4 V231 H1304.6 Z" fill="url(#bFoldB)" stroke="#4a86de" stroke-width="1"/>
<path d="M1304.2 227.4 Q1304.2 226.4 1305.2 226.4 H1319 Q1320 226.4 1320 227.4 V232.4 Q1320 233.4 1319 233.4 H1305.2 Q1304.2 233.4 1304.2 232.4 Z" fill="url(#bFoldF)" stroke="#5a92e0" stroke-width=".7"/>
<!-- Spin editor icon -->
<path d="M1297.6 259.4 L1306 245" stroke="#2c4c78" stroke-width="1"/>
<path d="M1304 245.4 L1306.8 243.9 L1306.9 247.2" stroke="#2c4c78" stroke-width="1" fill="none"/>
<ellipse cx="1301.9" cy="251.8" rx="8.6" ry="2.6" transform="rotate(33 1301.9 251.8)" fill="none" stroke="#5fd0e0" stroke-width=".7"/>
<circle cx="1301.9" cy="251.6" r="5.1" fill="url(#bSph)"/>
<path d="M1297.6 253.8 C1299.6 255.8 1303.4 257.6 1306.8 256.8" stroke="#5fd0e0" stroke-width=".7" fill="none"/>
<ellipse cx="1300.4" cy="249.2" rx="1.2" ry=".8" fill="#fff" transform="rotate(-25 1300.4 249.2)"/>
<!-- Add: plus -->
<path d="M303 319.4 Q303 318.3 304.1 318.3 H307.7 Q308.8 318.3 308.8 319.4 V326.1 H315.5 Q316.6 326.1 316.6 327.2 V330.8 Q316.6 331.9 315.5 331.9 H308.8 V338.6 Q308.8 339.7 307.7 339.7 H304.1 Q303 339.7 303 338.6 V331.9 H296.3 Q295.2 331.9 295.2 330.8 V327.2 Q295.2 326.1 296.3 326.1 H303 Z" fill="url(#bPlus)" stroke="#2a5fae" stroke-width=".8"/>
<path d="M304.2 319.3 H307.6 M296.4 327.1 H303.4 M308.6 327.1 H315.4" stroke="#a8ccf4" stroke-width=".9" fill="none"/>
<path d="M304 319.6 V326.6 M304 332 V338.4" stroke="#6fa6e4" stroke-width=".9"/>
<path d="M296.2 331.4 H303 M308.8 331.4 H315.6 M303.8 339.2 H308" stroke="#173f82" stroke-width=".8"/>
<!-- Delete: minus -->
<rect x="413" y="326.2" width="20.2" height="6.2" rx="2.6" fill="url(#bMinus)" stroke="#e89090" stroke-width=".7"/>
<path d="M415.4 327.6 H430.8" stroke="#f8a8a8" stroke-width=".8"/>
<!-- butterfly on Execute -->
<use href="#bfly" transform="translate(1220.9 929.9)"/>
<!-- cursor -->
<path d="M538.4 674.8 L538.4 690.2 L541.8 687.4 L544.6 693.2 L546.9 692.2 L544.2 686.5 L548.6 686.2 Z" fill="url(#curG)" stroke="#fff" stroke-width=".9" stroke-linejoin="round"/>
</svg>

</div>
</body>
</html>
